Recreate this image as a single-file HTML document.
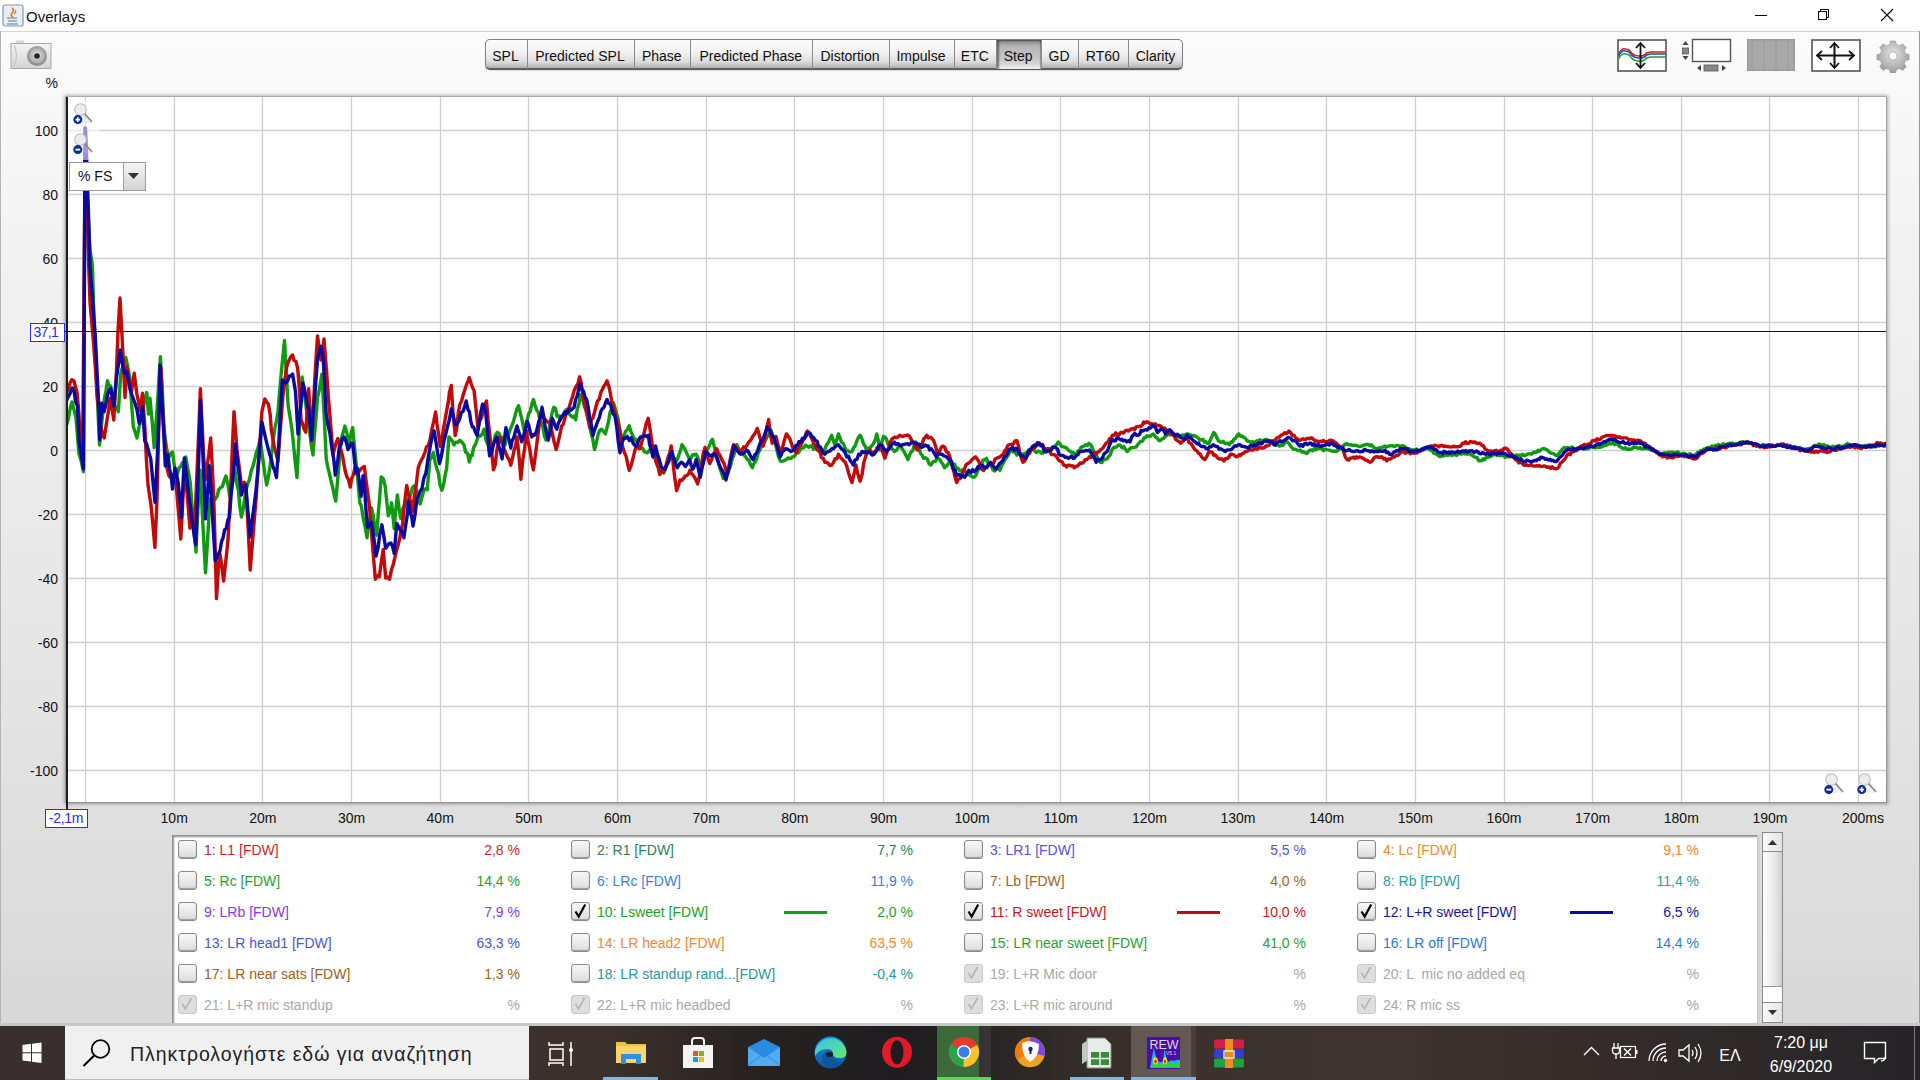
<!DOCTYPE html>
<html><head><meta charset="utf-8"><title>Overlays</title>
<style>
html,body{margin:0;padding:0;}
body{width:1920px;height:1080px;overflow:hidden;position:relative;font-family:"Liberation Sans",sans-serif;background:#fff;}
.t{position:absolute;white-space:pre;}
.a{position:absolute;}
</style></head><body>

<div class="a" style="left:0;top:0;width:1920px;height:31px;background:#ffffff;"></div>
<div class="a" style="left:0;top:31px;width:1920px;height:1px;background:#d2d2d2;"></div>
<div class="a" style="left:0;top:32px;width:1920px;height:994px;background:linear-gradient(#fbfbfb 0px,#f3f3f3 200px,#e6e6e6 600px,#d8d8d8 994px);"></div>
<div class="a" style="left:0;top:31px;width:1px;height:995px;background:#b4b4b4;"></div>
<div class="a" style="left:1919px;top:31px;width:1px;height:995px;background:#9a9a9a;"></div>
<svg class="a" style="left:2px;top:4px" width="22" height="24" viewBox="0 0 22 24">
<rect x="1" y="1" width="20" height="21" rx="2" fill="#e8eef4" stroke="#7a9ab4" stroke-width="1.2"/>
<path d="M10 4 q3 2 0 5 q-2 2 1 4" stroke="#e07820" stroke-width="1.6" fill="none"/>
<path d="M13 6 q2 1 -1 4" stroke="#e07820" stroke-width="1.2" fill="none"/>
<path d="M5 14 h10 M6 17 h9 M5 20 h11" stroke="#5a7a9a" stroke-width="1.2"/>
</svg>
<div class="t" style="left:26.0px;top:9.4px;font-size:15px;line-height:16.75px;color:#111;">Overlays</div>
<div class="a" style="left:1755px;top:15px;width:12px;height:1px;background:#000;"></div>
<svg class="a" style="left:1817px;top:8px" width="14" height="14" viewBox="0 0 14 14">
<rect x="1.5" y="3.5" width="8" height="8" fill="none" stroke="#000" stroke-width="1"/>
<path d="M3.5 3.5 v-2 h8 v8 h-2" fill="none" stroke="#000" stroke-width="1"/></svg>
<svg class="a" style="left:1880px;top:8px" width="14" height="14" viewBox="0 0 14 14">
<path d="M1 1 L13 13 M13 1 L1 13" stroke="#000" stroke-width="1.1"/></svg>
<svg class="a" style="left:10px;top:40px" width="42" height="30" viewBox="0 0 42 30">
<defs><linearGradient id="cam" x1="0" y1="0" x2="0" y2="1"><stop offset="0" stop-color="#f4f4f4"/><stop offset="1" stop-color="#d4d4d4"/></linearGradient>
<radialGradient id="lens" cx="0.5" cy="0.45" r="0.6"><stop offset="0" stop-color="#f0f0f0"/><stop offset="0.6" stop-color="#a8a8a8"/><stop offset="1" stop-color="#7a7a7a"/></radialGradient></defs>
<rect x="6" y="0.5" width="8" height="4" fill="#d8d8d8"/>
<rect x="1" y="3.5" width="40" height="25" fill="url(#cam)" stroke="#a8a8a8" stroke-width="1"/>
<path d="M4 5 q5 10 0 22" stroke="#c4c4c4" stroke-width="1.2" fill="none"/>
<circle cx="27" cy="16" r="10" fill="url(#lens)"/>
<circle cx="27" cy="16" r="6" fill="none" stroke="#bdbdbd" stroke-width="1.5"/>
<circle cx="27" cy="16" r="2.8" fill="#222436"/>
</svg>
<div class="a" style="left:485px;top:39px;width:698px;height:31px;border-radius:5px;background:linear-gradient(#fcfcfc 0%,#f2f2f2 45%,#dcdcdc 78%,#b0b0b0 100%);border:1.5px solid #808080;border-bottom:2px solid #5c5c5c;box-sizing:border-box;box-shadow:0 1px 1px rgba(0,0,0,0.12);"></div>
<div class="t" style="left:205.5px;width:600px;text-align:center;top:48.8px;font-size:14px;line-height:15.64px;color:#111;">SPL</div>
<div class="a" style="left:526.5px;top:40px;width:1px;height:29px;background:#8a8a8a;"></div>
<div class="t" style="left:280.0px;width:600px;text-align:center;top:48.8px;font-size:14px;line-height:15.64px;color:#111;">Predicted SPL</div>
<div class="a" style="left:633.5px;top:40px;width:1px;height:29px;background:#8a8a8a;"></div>
<div class="t" style="left:361.8px;width:600px;text-align:center;top:48.8px;font-size:14px;line-height:15.64px;color:#111;">Phase</div>
<div class="a" style="left:690.0px;top:40px;width:1px;height:29px;background:#8a8a8a;"></div>
<div class="t" style="left:450.8px;width:600px;text-align:center;top:48.8px;font-size:14px;line-height:15.64px;color:#111;">Predicted Phase</div>
<div class="a" style="left:811.5px;top:40px;width:1px;height:29px;background:#8a8a8a;"></div>
<div class="t" style="left:550.0px;width:600px;text-align:center;top:48.8px;font-size:14px;line-height:15.64px;color:#111;">Distortion</div>
<div class="a" style="left:888.5px;top:40px;width:1px;height:29px;background:#8a8a8a;"></div>
<div class="t" style="left:621.0px;width:600px;text-align:center;top:48.8px;font-size:14px;line-height:15.64px;color:#111;">Impulse</div>
<div class="a" style="left:953.5px;top:40px;width:1px;height:29px;background:#8a8a8a;"></div>
<div class="t" style="left:674.8px;width:600px;text-align:center;top:48.8px;font-size:14px;line-height:15.64px;color:#111;">ETC</div>
<div class="a" style="left:996.5px;top:40px;width:44.5px;height:29px;background:linear-gradient(#8a8a8a,#b8b8b8 25%,#c4c4c4 60%,#d8d8d8 85%,#f6f6f6);box-shadow:inset 2px 1px 2px rgba(0,0,0,0.45), inset -1px 0 1px rgba(0,0,0,0.3);"></div>
<div class="a" style="left:996.0px;top:40px;width:1px;height:29px;background:#8a8a8a;"></div>
<div class="t" style="left:718.2px;width:600px;text-align:center;top:48.8px;font-size:14px;line-height:15.64px;color:#111;">Step</div>
<div class="a" style="left:1040.5px;top:40px;width:1px;height:29px;background:#8a8a8a;"></div>
<div class="t" style="left:759.0px;width:600px;text-align:center;top:48.8px;font-size:14px;line-height:15.64px;color:#111;">GD</div>
<div class="a" style="left:1077.5px;top:40px;width:1px;height:29px;background:#8a8a8a;"></div>
<div class="t" style="left:802.8px;width:600px;text-align:center;top:48.8px;font-size:14px;line-height:15.64px;color:#111;">RT60</div>
<div class="a" style="left:1128.0px;top:40px;width:1px;height:29px;background:#8a8a8a;"></div>
<div class="t" style="left:855.5px;width:600px;text-align:center;top:48.8px;font-size:14px;line-height:15.64px;color:#111;">Clarity</div>
<svg class="a" style="left:1616px;top:38px" width="52" height="35" viewBox="0 0 52 35">
<rect x="2" y="2" width="48" height="31" fill="#fff" stroke="#555" stroke-width="1.6"/>
<path d="M2.5 16 q3 -6 7 -5 q4 0 6 4 q3 3 8 3 q5 0 7 -3 l4 -1 h15" stroke="#d02020" stroke-width="1.5" fill="none"/>
<path d="M2.5 18 q3 -6 7 -5 q4 0 6 4 q3 3 8 3 q5 0 7 -3 l4 -1 h15" stroke="#2040d0" stroke-width="1.5" fill="none"/>
<path d="M2.5 21 q3 -6 7 -5 q4 0 6 4 q3 3 8 3 q5 0 7 -3 l4 -1 h15" stroke="#20a020" stroke-width="1.5" fill="none"/>
<path d="M24.5 6 v23 M20 10 l4.5 -5 l4.5 5 M20 25 l4.5 5 l4.5 -5" stroke="#111" stroke-width="1.8" fill="none"/>
</svg>
<svg class="a" style="left:1680px;top:38px" width="54" height="36" viewBox="0 0 54 36">
<rect x="12.5" y="1.5" width="38" height="22" fill="#fff" stroke="#555" stroke-width="1.4"/>
<path d="M2.5 7 l3 -4 l3 4 z M2.5 18 l3 4 l3 -4 z" fill="#444"/>
<rect x="2.5" y="10" width="6" height="6" fill="#888" stroke="#555" stroke-width="0.8"/>
<path d="M17 30 l4 -3 v6 z M46 30 l-4 -3 v6 z" fill="#444"/>
<rect x="24" y="27" width="14" height="6" fill="#888" stroke="#555" stroke-width="0.8"/>
</svg>
<div class="a" style="left:1747px;top:39px;width:48px;height:32px;background:#a8a8a8;box-shadow:inset 0 0 0 1.5px #999;"></div>
<svg class="a" style="left:1747px;top:39px" width="48" height="32"><path d="M5 1 v30 M17 1 v30 M29 1 v30 M41 1 v30" stroke="#999" stroke-width="1"/></svg>
<svg class="a" style="left:1810px;top:38px" width="54" height="35" viewBox="0 0 54 35">
<rect x="2" y="2" width="48" height="31" fill="#fff" stroke="#555" stroke-width="1.6"/>
<path d="M24.5 5 v25 M7 17.5 h37" stroke="#111" stroke-width="2"/>
<path d="M20 10 l4.5 -5 l4.5 5 M20 25 l4.5 5 l4.5 -5 M12 13 l-5 4.5 l5 4.5 M39 13 l5 4.5 l-5 4.5" stroke="#111" stroke-width="1.8" fill="none"/>
</svg>
<svg class="a" style="left:1876px;top:39px" width="34" height="34" viewBox="0 0 34 34">
<defs><radialGradient id="gear" cx="0.5" cy="0.4" r="0.6"><stop offset="0" stop-color="#e8e8e8"/><stop offset="1" stop-color="#9a9a9a"/></radialGradient></defs>
<g transform="translate(17,17)">
<path d="M-2.6 -15 h5.2 l0.8 3.4 l3.2 1.3 l3 -1.9 l3.7 3.7 l-1.9 3 l1.3 3.2 l3.4 0.8 v5.2 l-3.4 0.8 l-1.3 3.2 l1.9 3 l-3.7 3.7 l-3 -1.9 l-3.2 1.3 l-0.8 3.4 h-5.2 l-0.8 -3.4 l-3.2 -1.3 l-3 1.9 l-3.7 -3.7 l1.9 -3 l-1.3 -3.2 l-3.4 -0.8 v-5.2 l3.4 -0.8 l1.3 -3.2 l-1.9 -3 l3.7 -3.7 l3 1.9 l3.2 -1.3 z" fill="url(#gear)" stroke="#9a9a9a" stroke-width="0.6"/>
<circle r="4.2" fill="#fafafa" stroke="#aaa" stroke-width="1"/>
</g></svg>
<div class="a" style="left:66px;top:97px;width:1820px;height:705px;background:#fff;box-shadow:0 0 0 1px rgba(0,0,0,0.12), 0 0 3.5px 2.5px rgba(0,0,0,0.30);"></div>
<div class="a" style="left:66px;top:97px;width:2px;height:705px;background:#1e1e1e;"></div>
<svg class="a" style="left:0;top:0" width="1920" height="1080">
<line x1="85.5" y1="97" x2="85.5" y2="802" stroke="#cfcfcf" stroke-width="1.3"/>
<line x1="174.5" y1="97" x2="174.5" y2="802" stroke="#cfcfcf" stroke-width="1.3"/>
<line x1="262.5" y1="97" x2="262.5" y2="802" stroke="#cfcfcf" stroke-width="1.3"/>
<line x1="351.5" y1="97" x2="351.5" y2="802" stroke="#cfcfcf" stroke-width="1.3"/>
<line x1="440.5" y1="97" x2="440.5" y2="802" stroke="#cfcfcf" stroke-width="1.3"/>
<line x1="528.5" y1="97" x2="528.5" y2="802" stroke="#cfcfcf" stroke-width="1.3"/>
<line x1="617.5" y1="97" x2="617.5" y2="802" stroke="#cfcfcf" stroke-width="1.3"/>
<line x1="706.5" y1="97" x2="706.5" y2="802" stroke="#cfcfcf" stroke-width="1.3"/>
<line x1="794.5" y1="97" x2="794.5" y2="802" stroke="#cfcfcf" stroke-width="1.3"/>
<line x1="883.5" y1="97" x2="883.5" y2="802" stroke="#cfcfcf" stroke-width="1.3"/>
<line x1="972.5" y1="97" x2="972.5" y2="802" stroke="#cfcfcf" stroke-width="1.3"/>
<line x1="1060.5" y1="97" x2="1060.5" y2="802" stroke="#cfcfcf" stroke-width="1.3"/>
<line x1="1149.5" y1="97" x2="1149.5" y2="802" stroke="#cfcfcf" stroke-width="1.3"/>
<line x1="1238.5" y1="97" x2="1238.5" y2="802" stroke="#cfcfcf" stroke-width="1.3"/>
<line x1="1326.5" y1="97" x2="1326.5" y2="802" stroke="#cfcfcf" stroke-width="1.3"/>
<line x1="1415.5" y1="97" x2="1415.5" y2="802" stroke="#cfcfcf" stroke-width="1.3"/>
<line x1="1504.5" y1="97" x2="1504.5" y2="802" stroke="#cfcfcf" stroke-width="1.3"/>
<line x1="1592.5" y1="97" x2="1592.5" y2="802" stroke="#cfcfcf" stroke-width="1.3"/>
<line x1="1681.5" y1="97" x2="1681.5" y2="802" stroke="#cfcfcf" stroke-width="1.3"/>
<line x1="1769.5" y1="97" x2="1769.5" y2="802" stroke="#cfcfcf" stroke-width="1.3"/>
<line x1="1858.5" y1="97" x2="1858.5" y2="802" stroke="#cfcfcf" stroke-width="1.3"/>
<line x1="68" y1="770.5" x2="1886" y2="770.5" stroke="#cfcfcf" stroke-width="1.3"/>
<line x1="68" y1="706.5" x2="1886" y2="706.5" stroke="#cfcfcf" stroke-width="1.3"/>
<line x1="68" y1="642.5" x2="1886" y2="642.5" stroke="#cfcfcf" stroke-width="1.3"/>
<line x1="68" y1="578.5" x2="1886" y2="578.5" stroke="#cfcfcf" stroke-width="1.3"/>
<line x1="68" y1="514.5" x2="1886" y2="514.5" stroke="#cfcfcf" stroke-width="1.3"/>
<line x1="68" y1="450.5" x2="1886" y2="450.5" stroke="#cfcfcf" stroke-width="1.3"/>
<line x1="68" y1="386.5" x2="1886" y2="386.5" stroke="#cfcfcf" stroke-width="1.3"/>
<line x1="68" y1="322.5" x2="1886" y2="322.5" stroke="#cfcfcf" stroke-width="1.3"/>
<line x1="68" y1="258.5" x2="1886" y2="258.5" stroke="#cfcfcf" stroke-width="1.3"/>
<line x1="68" y1="194.5" x2="1886" y2="194.5" stroke="#cfcfcf" stroke-width="1.3"/>
<line x1="68" y1="130.5" x2="1886" y2="130.5" stroke="#cfcfcf" stroke-width="1.3"/>
</svg>
<div class="t" style="right:1862.0px;top:764.0px;font-size:14px;line-height:15.64px;color:#111;">-100</div>
<div class="t" style="right:1862.0px;top:700.0px;font-size:14px;line-height:15.64px;color:#111;">-80</div>
<div class="t" style="right:1862.0px;top:636.0px;font-size:14px;line-height:15.64px;color:#111;">-60</div>
<div class="t" style="right:1862.0px;top:572.0px;font-size:14px;line-height:15.64px;color:#111;">-40</div>
<div class="t" style="right:1862.0px;top:508.0px;font-size:14px;line-height:15.64px;color:#111;">-20</div>
<div class="t" style="right:1862.0px;top:444.0px;font-size:14px;line-height:15.64px;color:#111;">0</div>
<div class="t" style="right:1862.0px;top:380.0px;font-size:14px;line-height:15.64px;color:#111;">20</div>
<div class="t" style="right:1862.0px;top:252.1px;font-size:14px;line-height:15.64px;color:#111;">60</div>
<div class="t" style="right:1862.0px;top:188.1px;font-size:14px;line-height:15.64px;color:#111;">80</div>
<div class="t" style="right:1862.0px;top:124.1px;font-size:14px;line-height:15.64px;color:#111;">100</div>
<div class="t" style="right:1862.0px;top:316.0px;font-size:14px;line-height:15.64px;color:#111;clip-path:inset(0 0 6px 0);">40</div>
<div class="t" style="right:1862.0px;top:76.3px;font-size:14px;line-height:15.64px;color:#111;">%</div>
<div class="t" style="left:-125.8px;width:600px;text-align:center;top:810.8px;font-size:14px;line-height:15.64px;color:#111;">10m</div>
<div class="t" style="left:-37.1px;width:600px;text-align:center;top:810.8px;font-size:14px;line-height:15.64px;color:#111;">20m</div>
<div class="t" style="left:51.5px;width:600px;text-align:center;top:810.8px;font-size:14px;line-height:15.64px;color:#111;">30m</div>
<div class="t" style="left:140.2px;width:600px;text-align:center;top:810.8px;font-size:14px;line-height:15.64px;color:#111;">40m</div>
<div class="t" style="left:228.9px;width:600px;text-align:center;top:810.8px;font-size:14px;line-height:15.64px;color:#111;">50m</div>
<div class="t" style="left:317.5px;width:600px;text-align:center;top:810.8px;font-size:14px;line-height:15.64px;color:#111;">60m</div>
<div class="t" style="left:406.2px;width:600px;text-align:center;top:810.8px;font-size:14px;line-height:15.64px;color:#111;">70m</div>
<div class="t" style="left:494.8px;width:600px;text-align:center;top:810.8px;font-size:14px;line-height:15.64px;color:#111;">80m</div>
<div class="t" style="left:583.5px;width:600px;text-align:center;top:810.8px;font-size:14px;line-height:15.64px;color:#111;">90m</div>
<div class="t" style="left:672.1px;width:600px;text-align:center;top:810.8px;font-size:14px;line-height:15.64px;color:#111;">100m</div>
<div class="t" style="left:760.8px;width:600px;text-align:center;top:810.8px;font-size:14px;line-height:15.64px;color:#111;">110m</div>
<div class="t" style="left:849.4px;width:600px;text-align:center;top:810.8px;font-size:14px;line-height:15.64px;color:#111;">120m</div>
<div class="t" style="left:938.0px;width:600px;text-align:center;top:810.8px;font-size:14px;line-height:15.64px;color:#111;">130m</div>
<div class="t" style="left:1026.7px;width:600px;text-align:center;top:810.8px;font-size:14px;line-height:15.64px;color:#111;">140m</div>
<div class="t" style="left:1115.3px;width:600px;text-align:center;top:810.8px;font-size:14px;line-height:15.64px;color:#111;">150m</div>
<div class="t" style="left:1204.0px;width:600px;text-align:center;top:810.8px;font-size:14px;line-height:15.64px;color:#111;">160m</div>
<div class="t" style="left:1292.6px;width:600px;text-align:center;top:810.8px;font-size:14px;line-height:15.64px;color:#111;">170m</div>
<div class="t" style="left:1381.3px;width:600px;text-align:center;top:810.8px;font-size:14px;line-height:15.64px;color:#111;">180m</div>
<div class="t" style="left:1470.0px;width:600px;text-align:center;top:810.8px;font-size:14px;line-height:15.64px;color:#111;">190m</div>
<div class="t" style="right:36.0px;top:810.8px;font-size:14px;line-height:15.64px;color:#111;">200ms</div>
<svg class="a" style="left:0;top:0" width="1920" height="1080"><defs><clipPath id="pc"><rect x="68" y="97" width="1818" height="705"/></clipPath></defs><g clip-path="url(#pc)" fill="none" stroke-width="3.4" stroke-linejoin="round" stroke-linecap="round">
<polyline points="66.6,425.0 68.2,419.3 70.3,408.3 72.0,402.0 74.0,409.7 76.0,418.0 77.6,437.6 79.0,454.0 81.0,460.2 83.4,471.7 84.3,300.0 85.0,140.0 87.0,200.0 88.7,224.6 90.0,250.0 92.4,265.0 94.0,320.0 95.6,352.2 97.0,390.0 99.5,445.0 102.0,420.0 104.5,398.0 106.0,390.6 107.5,380.8 108.9,385.9 110.5,386.0 112.5,394.2 115.0,408.0 116.9,407.2 118.3,411.7 120.8,373.3 122.2,368.3 124.4,362.1 125.8,357.5 127.8,367.5 130.0,378.3 131.4,400.9 133.3,426.7 135.1,432.3 137.0,438.0 138.9,427.5 141.0,420.0 142.8,410.6 144.7,399.0 146.7,392.5 148.5,414.0 150.0,398.3 152.3,423.2 154.2,447.5 157.0,410.0 158.8,381.6 160.4,356.7 162.5,395.4 164.2,430.0 166.7,449.0 169.0,457.0 170.6,453.6 172.5,452.0 174.4,466.2 176.0,478.0 177.7,472.6 179.0,468.0 180.9,466.2 182.3,463.0 184.3,461.7 185.8,457.0 188.0,470.0 190.2,482.0 191.9,503.9 194.2,528.2 196.0,552.0 197.8,511.3 200.0,470.0 201.9,505.2 203.6,538.1 205.5,572.7 207.0,550.0 208.5,523.6 210.0,500.0 211.7,497.2 213.2,500.7 215.2,499.4 217.2,496.1 218.6,489.8 220.4,487.8 222.3,486.6 224.3,480.2 226.0,476.0 228.0,484.8 229.7,496.5 231.5,490.2 233.3,478.6 235.0,470.0 236.5,482.0 238.4,490.7 239.9,507.0 241.4,517.0 243.1,509.3 244.6,499.1 246.0,490.0 247.8,483.5 249.3,480.0 251.4,470.2 253.1,465.8 254.8,459.3 256.5,452.0 258.3,447.1 260.0,440.0 261.7,451.0 263.1,461.0 264.9,474.2 266.7,485.0 268.5,476.2 270.1,465.8 271.4,455.5 273.2,440.8 274.5,429.9 276.5,420.8 278.0,411.7 279.4,394.6 281.2,373.7 282.7,358.5 284.5,340.5 286.2,372.1 288.2,406.3 290.2,417.9 292.0,430.0 293.6,445.7 295.1,461.0 297.0,477.5 298.7,442.3 300.2,412.7 302.1,377.0 304.1,389.7 306.1,407.4 308.0,420.0 309.4,429.0 311.2,444.6 313.0,455.0 314.3,437.0 316.1,416.9 317.5,397.5 319.6,388.5 321.9,374.1 324.2,416.4 326.2,458.5 327.6,466.4 329.3,473.1 330.9,480.5 332.3,485.7 334.4,496.0 335.7,501.0 337.4,482.7 339.1,462.8 341.0,440.0 343.1,432.6 344.9,426.1 346.8,432.8 349.0,445.0 351.0,433.7 352.7,427.6 354.5,447.4 356.0,462.0 357.9,480.6 359.8,502.8 361.3,505.9 363.4,519.2 365.2,527.2 367.0,537.8 368.4,527.0 369.9,518.9 371.5,508.0 373.2,515.4 374.8,527.1 376.7,535.2 378.1,515.8 379.6,498.4 381.2,476.9 383.3,478.7 385.1,485.9 386.6,499.8 388.3,515.7 390.2,510.8 391.6,502.8 394.2,528.7 395.7,510.2 397.4,495.0 399.1,508.5 400.7,518.3 402.6,509.3 404.5,505.0 406.3,503.4 407.8,498.9 409.4,498.4 410.9,493.7 412.5,487.3 414.3,485.9 416.4,490.3 418.3,498.5 420.1,504.0 422.2,496.3 424.0,490.0 425.5,488.7 427.2,489.8 429.8,460.0 431.7,456.9 433.3,452.7 435.2,462.4 436.6,468.0 438.3,472.6 440.0,484.8 441.9,490.2 443.6,484.6 445.0,475.9 446.7,467.8 448.9,437.0 450.7,439.0 452.3,440.8 454.0,445.0 455.8,442.1 458.1,442.2 459.9,440.2 462.2,442.4 464.0,445.0 465.7,452.3 467.7,453.6 469.3,462.0 470.9,455.3 472.2,455.4 473.7,447.3 475.7,444.0 477.0,440.0 478.6,435.4 480.4,436.0 482.1,434.2 484.1,429.2 486.0,440.4 488.2,445.2 490.0,455.0 491.7,449.2 493.5,444.5 495.3,435.2 497.4,432.3 499.2,433.7 500.5,437.1 501.9,437.5 503.7,445.1 505.0,445.0 506.9,437.8 508.2,435.7 510.0,430.0 512.0,425.4 513.5,421.2 515.0,415.7 516.8,409.1 518.6,405.7 520.2,412.6 522.4,421.6 524.0,430.0 525.6,425.7 527.4,419.2 528.6,413.8 530.2,411.6 532.0,403.5 533.4,399.5 535.0,404.9 536.7,410.3 538.2,412.2 540.0,420.0 541.4,422.6 543.0,427.6 544.3,435.8 546.0,440.0 547.5,435.1 549.1,429.0 550.5,420.4 552.4,411.5 553.8,407.3 555.6,408.6 557.0,416.4 558.6,415.8 560.0,420.0 561.4,418.1 563.4,414.8 565.0,412.0 566.6,409.4 568.0,410.0 569.4,414.2 571.2,416.2 572.8,417.3 574.3,416.0 575.7,419.8 577.2,409.6 578.9,404.1 580.4,394.8 582.1,397.4 584.4,406.7 586.0,410.0 587.7,418.1 589.6,425.5 591.0,432.8 592.7,438.9 594.5,449.5 596.4,442.5 598.2,434.0 600.0,430.0 601.7,429.3 603.4,431.3 605.4,433.9 607.1,427.1 608.5,422.0 610.0,412.4 611.7,408.9 613.3,402.6 615.6,409.8 617.7,417.6 619.9,430.1 622.0,440.0 623.7,436.4 625.6,431.3 627.4,429.6 629.2,425.7 631.3,432.8 633.0,436.1 635.0,440.0 636.3,439.6 638.0,446.1 639.3,447.5 641.0,448.0 642.8,448.5 644.3,451.7 645.8,452.4 647.5,452.8 649.1,450.6 650.7,449.1 652.0,445.0 653.7,450.3 654.8,454.1 656.4,460.3 658.0,465.0 660.0,466.0 661.9,471.2 663.7,473.1 665.2,468.6 666.7,464.9 668.2,461.4 670.0,455.0 671.7,457.2 672.9,460.1 674.7,458.9 676.0,462.0 677.6,459.0 679.1,454.1 680.5,450.6 682.0,444.7 684.0,447.6 685.7,451.1 687.1,454.0 689.0,458.0 690.6,458.6 692.8,454.7 694.5,454.8 696.2,454.2 697.9,458.0 699.9,464.3 702.0,468.0 703.4,460.8 705.3,454.2 707.0,450.0 708.9,446.8 710.8,441.8 712.5,439.3 714.2,446.4 716.1,453.4 718.0,460.0 719.6,466.9 721.7,473.5 723.3,478.5 725.4,475.8 727.1,474.2 729.0,470.0 730.7,465.2 732.1,459.1 733.5,456.0 735.1,450.7 736.9,444.7 738.7,449.0 740.6,451.6 742.0,452.4 744.0,455.0 745.7,456.8 747.4,459.5 749.1,460.7 750.7,465.0 752.4,467.7 753.8,463.8 755.6,461.3 757.0,457.6 758.4,452.4 760.0,450.0 761.3,446.3 763.1,445.7 764.8,441.4 766.4,438.3 767.8,435.2 769.3,434.5 770.7,429.8 772.2,433.7 773.9,440.3 775.4,443.5 777.0,450.3 778.6,457.1 780.2,460.9 781.8,461.3 783.4,460.8 784.8,460.3 786.4,459.5 787.9,458.0 789.4,458.4 791.1,458.5 792.4,456.9 794.1,456.5 795.6,454.5 796.9,451.9 798.6,452.8 800.0,450.0 801.8,447.7 803.8,447.9 805.5,445.3 807.3,446.0 808.8,447.3 810.3,446.2 812.0,445.4 813.5,449.3 815.0,448.0 816.7,448.4 818.3,450.0 819.7,449.3 821.6,450.3 823.0,452.0 824.5,449.9 826.5,444.8 828.2,442.8 829.8,439.1 831.7,435.2 833.5,441.3 835.0,445.0 836.6,439.9 838.4,433.9 839.9,437.7 841.5,442.1 843.5,443.8 845.0,448.0 846.6,450.6 848.6,451.1 850.0,452.1 852.0,451.5 853.7,447.5 855.2,446.0 857.0,440.5 858.5,437.2 860.1,435.2 862.0,439.1 863.7,444.2 865.3,446.5 866.9,451.5 868.5,447.9 870.0,448.0 871.7,445.9 873.3,443.6 875.0,440.6 876.8,433.9 878.5,441.2 880.0,450.0 881.6,442.9 883.5,436.6 885.1,437.2 886.5,439.2 888.2,444.5 889.6,443.3 891.4,448.4 893.1,449.8 894.4,451.5 896.2,450.6 897.9,447.9 900.0,445.0 901.4,447.5 903.2,450.4 904.6,452.7 906.5,456.5 907.9,459.6 909.6,455.0 911.2,451.9 912.8,450.6 914.6,443.8 916.0,442.0 917.6,446.6 918.9,448.1 920.5,453.3 922.0,455.0 923.7,458.4 925.7,457.7 927.5,459.2 928.9,463.6 930.9,465.0 932.2,462.8 933.8,461.4 935.6,461.3 937.0,458.0 938.3,458.3 940.2,460.1 941.4,462.4 942.8,464.0 944.5,467.7 946.4,466.1 948.3,463.9 950.0,460.0 951.6,461.3 953.2,465.3 954.8,464.2 956.0,468.6 957.9,468.1 959.4,470.4 961.1,471.0 962.7,469.5 964.3,471.3 966.0,472.0 967.5,474.5 969.3,474.7 971.1,476.0 972.8,477.1 974.3,477.2 976.1,474.9 977.9,470.7 980.0,465.0 981.8,464.6 983.0,460.0 985.0,459.8 986.5,458.2 988.1,463.0 989.5,464.2 991.3,465.6 993.0,470.0 994.7,470.9 996.7,468.4 998.3,468.7 1000.0,470.4 1001.8,465.4 1003.1,463.2 1005.1,459.5 1006.5,457.9 1008.5,454.8 1010.0,450.0 1011.6,450.5 1013.2,451.9 1014.9,451.9 1016.8,455.1 1018.4,452.7 1020.0,455.0 1021.7,454.0 1023.6,454.2 1025.2,453.3 1026.7,453.2 1028.5,450.0 1030.0,450.0 1031.5,449.9 1033.3,449.2 1034.9,451.3 1036.4,452.6 1038.4,451.0 1039.9,451.5 1041.6,453.4 1043.3,452.8 1045.0,451.7 1046.4,452.0 1048.2,448.5 1049.7,449.8 1051.6,448.4 1053.4,447.4 1055.0,446.0 1056.8,444.3 1058.2,442.0 1059.7,443.4 1061.6,446.6 1063.4,446.8 1065.0,447.4 1066.8,448.1 1068.6,450.5 1070.0,451.1 1071.9,452.6 1073.2,452.4 1075.0,455.0 1076.6,453.7 1078.2,450.8 1079.5,451.4 1080.8,447.5 1082.5,446.6 1084.0,446.0 1085.5,444.8 1087.4,445.5 1088.8,443.4 1090.7,444.7 1092.5,448.2 1093.7,451.9 1095.2,453.0 1097.2,457.2 1098.5,460.9 1100.2,462.3 1101.9,462.6 1103.6,459.9 1105.1,459.2 1106.9,459.1 1108.3,456.9 1110.2,454.9 1112.1,449.6 1113.7,447.4 1115.1,447.7 1117.0,446.3 1118.4,445.2 1120.0,445.0 1122.0,447.8 1123.7,446.5 1125.7,449.7 1127.3,451.5 1128.9,449.7 1131.0,447.6 1132.5,447.7 1134.5,447.4 1136.3,446.8 1137.9,444.4 1139.3,442.8 1140.8,441.2 1142.6,441.2 1144.0,437.9 1145.5,437.7 1147.0,435.8 1148.7,436.2 1150.3,436.4 1151.7,434.9 1153.4,433.9 1155.5,436.7 1157.1,438.1 1158.9,440.6 1160.4,440.5 1162.2,438.8 1163.8,438.3 1165.3,435.9 1166.7,435.7 1168.3,433.9 1169.8,434.9 1171.4,434.3 1172.9,434.1 1174.5,435.2 1175.8,435.0 1177.5,437.1 1179.2,436.6 1180.9,435.5 1182.7,434.9 1184.1,435.6 1185.8,434.3 1187.3,433.9 1189.0,434.4 1190.5,435.0 1192.2,436.1 1193.3,435.3 1195.2,436.1 1196.3,436.7 1198.1,437.9 1199.6,439.8 1201.2,440.0 1202.9,439.2 1204.4,442.2 1205.9,441.8 1207.4,443.6 1209.0,443.3 1210.8,438.7 1212.2,435.9 1213.7,432.5 1215.4,434.3 1216.7,437.4 1218.4,440.6 1219.9,441.9 1221.7,442.5 1223.2,441.4 1224.6,443.3 1226.1,443.5 1227.9,443.2 1229.3,444.7 1231.0,442.0 1232.4,442.1 1233.9,439.3 1235.5,438.4 1237.4,435.2 1238.7,433.9 1240.3,436.2 1242.0,435.9 1243.7,437.5 1245.3,438.1 1246.9,440.6 1248.8,441.3 1250.5,442.4 1251.8,441.7 1253.6,442.0 1255.1,442.3 1256.8,440.7 1258.1,441.5 1259.7,439.8 1261.1,440.5 1262.8,441.1 1264.3,439.9 1265.8,439.3 1267.1,439.8 1268.7,441.3 1270.2,440.8 1271.8,442.2 1273.3,443.3 1274.7,444.7 1276.5,444.6 1277.7,444.8 1279.4,446.0 1281.1,445.5 1282.8,445.3 1284.2,443.6 1285.8,441.9 1287.5,442.0 1289.1,443.6 1290.9,446.6 1292.9,448.7 1294.5,449.4 1296.0,449.1 1297.3,450.4 1299.2,450.6 1300.3,450.1 1302.0,452.1 1303.4,451.6 1305.1,452.8 1306.7,453.5 1308.1,452.0 1309.7,450.1 1311.1,449.9 1312.6,450.9 1314.3,448.6 1315.6,449.8 1317.3,448.7 1318.7,448.5 1320.3,448.1 1321.8,448.5 1323.5,450.7 1325.2,449.2 1326.8,449.6 1328.3,449.9 1330.1,450.2 1331.6,451.1 1333.2,451.3 1334.8,451.0 1336.2,451.5 1337.9,450.4 1339.5,448.9 1341.1,447.2 1343.0,446.4 1344.4,444.7 1346.0,443.7 1347.6,444.2 1349.1,444.9 1350.8,444.6 1352.3,445.4 1354.0,445.2 1355.4,445.2 1357.3,445.8 1358.8,446.6 1360.5,446.3 1362.0,446.0 1363.3,445.3 1365.2,444.7 1366.9,444.5 1368.5,444.5 1370.0,445.8 1371.4,444.7 1373.2,447.0 1374.9,448.2 1376.9,448.7 1378.5,448.0 1379.9,447.9 1381.6,447.5 1383.5,446.8 1385.0,446.0 1386.3,447.0 1388.4,446.2 1389.7,445.9 1391.5,445.6 1393.0,445.9 1394.4,446.6 1396.0,445.7 1397.6,445.4 1399.0,445.8 1400.6,446.7 1402.2,445.6 1403.8,446.2 1405.6,447.2 1407.1,449.1 1409.0,448.8 1410.6,449.6 1411.9,450.0 1413.5,449.8 1415.2,450.1 1416.6,449.1 1418.3,450.8 1419.6,450.5 1421.1,449.9 1422.9,450.0 1424.0,449.0 1425.6,448.5 1427.4,448.7 1428.7,448.7 1430.4,450.2 1431.9,449.9 1433.5,453.0 1434.9,453.6 1436.6,454.0 1438.2,455.5 1439.8,456.6 1441.0,456.3 1442.7,456.0 1444.2,455.7 1445.7,454.7 1447.6,455.4 1449.1,454.8 1450.5,454.8 1452.1,455.3 1453.4,454.5 1455.1,454.7 1456.8,455.3 1458.0,454.1 1459.5,453.1 1461.2,454.2 1462.6,453.2 1464.6,454.0 1466.3,452.9 1467.6,454.2 1469.4,452.8 1471.1,455.0 1472.2,454.9 1474.1,456.8 1475.8,457.5 1477.1,457.4 1478.8,460.9 1480.2,460.9 1481.9,460.5 1483.1,458.8 1484.8,459.7 1486.4,457.1 1487.7,457.2 1489.2,457.1 1490.9,456.2 1492.3,455.4 1493.7,454.2 1495.4,454.6 1496.9,455.5 1498.5,455.4 1500.3,455.5 1502.0,455.6 1503.9,455.4 1505.0,457.4 1506.9,456.1 1508.6,456.9 1510.1,456.9 1512.0,456.9 1513.3,456.3 1514.9,456.0 1516.5,454.9 1518.1,455.5 1519.6,455.1 1521.0,456.0 1522.6,454.2 1524.2,455.7 1525.8,455.1 1527.3,454.2 1528.5,453.9 1530.1,453.8 1531.7,454.2 1533.2,452.6 1534.6,452.0 1536.2,452.6 1537.9,450.3 1539.4,451.2 1541.0,449.6 1542.5,448.7 1543.9,448.7 1545.6,449.2 1547.1,449.9 1548.6,451.4 1550.1,452.7 1551.3,453.3 1552.8,453.4 1554.4,454.2 1556.0,455.5 1557.7,455.0 1559.2,453.1 1560.8,451.1 1562.5,449.1 1564.2,447.4 1565.6,448.2 1567.2,447.4 1568.8,448.3 1570.5,447.9 1572.2,447.1 1573.4,448.5 1575.1,448.6 1577.0,448.2 1578.2,448.8 1580.0,447.4 1581.4,448.1 1583.1,448.1 1584.4,449.0 1586.2,448.7 1587.6,448.9 1589.0,448.3 1590.5,446.5 1592.0,446.9 1593.8,447.3 1595.2,447.8 1596.7,447.4 1598.2,447.3 1600.0,447.5 1601.6,446.8 1603.4,446.2 1604.8,444.5 1606.2,445.4 1607.9,444.3 1609.6,442.5 1611.1,443.9 1612.9,442.7 1614.5,444.6 1616.2,443.4 1617.6,444.2 1619.0,446.0 1620.8,447.2 1622.0,447.9 1623.7,448.7 1625.3,447.8 1626.9,449.3 1628.8,449.0 1630.0,449.2 1631.8,448.9 1633.3,447.1 1635.3,447.3 1636.5,447.7 1638.6,448.3 1640.0,447.4 1641.6,448.9 1643.5,448.9 1645.2,448.1 1647.0,448.6 1648.5,449.0 1650.3,449.7 1651.8,450.1 1653.1,450.9 1654.6,450.4 1656.3,452.7 1657.7,453.3 1659.4,453.0 1661.0,453.6 1662.4,454.0 1664.0,452.9 1665.2,452.8 1666.7,453.5 1668.3,452.1 1669.9,452.6 1671.4,452.2 1672.9,452.1 1674.6,453.2 1676.0,452.7 1677.8,451.9 1679.1,452.9 1680.7,454.6 1682.4,454.0 1683.7,453.2 1685.4,454.3 1687.1,455.6 1688.7,454.8 1689.8,453.6 1691.6,455.5 1693.0,456.0 1694.6,455.0 1696.2,454.3 1697.7,452.2 1699.0,453.4 1700.6,450.5 1702.1,451.2 1703.6,449.1 1705.2,448.8 1706.8,448.0 1708.6,447.2 1710.3,448.5 1711.9,446.0 1713.3,447.7 1715.3,445.5 1716.7,445.7 1718.5,444.5 1720.0,445.9 1721.7,445.0 1723.5,443.7 1725.1,445.1 1726.9,444.3 1728.6,443.6 1729.8,443.3 1731.7,443.1 1733.2,443.1 1734.7,444.8 1736.6,443.5 1738.1,444.5 1739.8,442.5 1741.4,441.9 1743.0,441.8 1744.2,442.9 1745.6,443.3 1747.4,442.5 1748.7,443.7 1750.2,443.4 1751.8,443.3 1753.5,443.9 1755.0,445.1 1756.4,444.4 1758.2,445.1 1759.6,446.0 1761.4,445.7 1762.7,444.6 1764.0,444.6 1765.8,445.8 1767.5,445.1 1769.0,444.8 1770.4,445.0 1771.7,444.8 1773.6,445.7 1775.3,445.8 1776.6,445.1 1778.1,444.9 1779.7,445.2 1781.2,445.0 1782.9,445.1 1784.2,446.3 1785.9,445.8 1787.3,446.7 1788.9,445.7 1790.3,446.8 1791.6,446.6 1793.4,447.0 1795.3,446.6 1796.7,448.0 1798.6,448.3 1800.1,447.8 1801.6,448.7 1803.3,449.4 1804.7,449.5 1806.8,448.8 1808.3,449.5 1809.6,448.3 1811.5,448.6 1813.2,446.4 1814.3,445.4 1816.3,445.9 1817.5,445.2 1819.2,444.0 1820.9,444.7 1822.1,446.0 1823.8,444.6 1825.4,445.8 1826.8,445.9 1828.2,446.4 1829.8,447.0 1831.3,447.5 1833.1,446.2 1834.3,448.0 1836.2,447.0 1837.8,445.8 1839.2,445.4 1840.7,447.0 1842.6,446.5 1843.9,445.8 1845.6,445.0 1847.4,443.6 1848.9,444.5 1850.3,444.8 1852.1,444.9 1853.3,445.2 1855.0,444.7 1856.5,444.8 1857.7,445.0 1859.3,445.6 1861.0,446.7 1862.5,446.0 1864.2,446.6 1865.8,445.4 1867.1,445.4 1868.5,446.0 1870.2,445.1 1872.0,447.1 1873.3,446.0 1874.6,444.8 1876.1,446.6 1878.1,445.0 1879.2,446.1 1880.8,444.8 1882.2,445.3 1883.8,445.5 1885.5,446.0" stroke="#109a10"/>
<polyline points="66.6,392.0 68.5,390.0 70.0,383.0 71.8,379.7 74.0,381.0 75.7,387.8 77.0,392.0 78.6,409.9 80.0,430.0 82.5,462.0 84.0,300.0 85.5,128.0 86.5,150.0 88.5,260.0 90.0,302.0 91.7,321.6 93.3,340.0 95.2,365.6 97.0,395.0 98.7,409.4 100.5,425.0 102.5,434.3 104.2,438.0 107.0,420.0 108.7,409.4 110.0,398.3 111.9,407.9 113.8,420.0 116.5,370.0 118.0,331.4 120.0,298.0 122.5,345.0 125.0,397.5 126.7,366.7 129.0,380.0 131.5,392.0 134.2,373.3 137.0,395.0 138.5,401.9 140.0,410.8 142.5,393.3 145.0,430.0 146.4,459.7 148.0,485.0 149.5,495.3 151.0,505.0 152.8,523.5 154.9,547.4 157.0,500.0 159.5,395.0 161.0,368.0 163.0,420.0 164.9,442.0 167.0,468.0 169.0,475.8 171.0,478.0 172.8,477.6 174.5,482.3 176.0,482.0 177.7,503.3 179.3,521.6 180.8,539.0 182.5,507.2 184.3,470.0 187.0,492.0 189.9,528.0 191.8,523.4 193.4,523.9 195.0,520.0 196.8,476.4 198.6,434.8 200.4,388.7 201.9,421.0 203.4,451.7 205.0,480.0 207.1,465.8 208.8,454.4 210.7,438.0 212.5,471.4 214.0,505.0 216.5,598.6 218.0,574.8 219.7,553.0 221.7,565.1 223.6,581.0 226.0,559.2 228.0,540.0 229.7,506.9 231.2,477.0 232.5,443.9 234.0,411.7 235.6,431.3 237.0,450.0 238.9,464.4 241.0,482.0 242.6,485.8 244.3,482.3 245.8,486.0 248.2,529.3 250.2,570.0 252.3,544.9 254.2,520.9 256.0,500.0 258.0,469.3 259.8,443.2 261.9,411.7 264.8,399.0 266.5,401.8 268.5,404.4 270.2,414.8 271.4,430.3 273.0,440.0 274.6,448.3 276.1,453.5 278.0,461.4 279.5,440.2 281.1,419.7 283.0,395.0 284.6,382.2 286.7,366.8 288.4,361.5 290.8,357.0 292.6,355.0 294.1,360.5 295.9,361.3 297.7,368.3 299.6,392.2 301.0,420.0 302.4,423.2 304.3,429.5 305.8,432.2 308.7,388.7 311.6,441.0 313.4,405.1 315.3,370.7 317.5,336.0 319.4,349.3 321.0,360.0 322.7,350.9 324.0,339.0 326.4,369.4 328.4,397.5 329.9,415.1 331.5,434.8 333.0,455.0 334.4,449.2 336.4,442.0 337.8,438.6 339.4,444.4 340.8,449.4 342.6,456.4 343.9,463.7 345.1,470.8 346.9,476.9 348.4,479.5 350.3,487.1 351.6,478.8 353.2,475.1 355.0,468.0 356.7,471.4 358.6,472.1 360.0,470.0 362.1,467.9 364.4,466.5 365.8,478.7 367.5,491.5 368.9,501.5 370.6,519.6 372.1,540.5 373.5,557.2 375.4,579.3 377.3,575.8 379.3,576.7 381.4,561.6 383.2,549.5 385.7,578.0 387.4,576.9 389.6,579.3 391.4,569.9 393.5,563.7 395.0,556.8 396.4,551.1 397.9,545.9 399.8,538.2 401.1,530.3 402.6,523.5 404.7,502.0 406.7,485.5 408.5,494.4 410.3,500.8 412.3,511.9 414.4,496.5 416.2,484.9 418.2,467.8 420.0,462.7 421.8,459.2 423.1,457.0 425.0,452.0 426.5,446.9 428.5,445.0 430.0,440.0 431.6,430.4 433.7,421.3 435.6,412.0 437.0,424.0 438.5,433.7 440.3,446.4 441.8,440.1 443.2,430.4 444.9,420.7 446.5,411.3 448.3,402.2 449.5,392.0 451.3,385.4 453.0,412.4 455.2,435.5 456.8,427.6 458.4,412.0 459.9,404.2 461.5,401.3 463.1,395.3 464.5,390.7 466.3,385.2 467.7,381.9 469.3,377.6 471.1,383.5 472.6,387.8 474.0,390.1 475.8,407.3 477.9,427.6 479.6,420.9 481.3,418.0 483.3,412.1 484.9,404.1 486.5,401.0 488.2,421.0 489.8,435.0 491.5,450.4 493.5,469.9 495.3,464.4 496.7,451.4 498.1,443.7 499.8,437.0 501.5,442.0 502.9,445.2 504.3,449.3 506.3,454.5 507.5,457.2 509.3,459.8 510.8,465.2 512.5,457.9 514.0,450.6 515.7,445.6 517.0,437.0 519.0,456.2 520.9,479.3 522.7,460.5 524.6,449.1 526.4,430.8 528.0,440.6 529.9,449.8 531.8,462.6 533.4,469.9 535.3,455.7 537.2,440.8 538.8,428.6 540.5,413.6 542.3,417.4 543.8,417.9 545.6,420.0 547.5,421.6 548.8,422.5 550.7,424.5 552.6,435.0 554.4,442.9 556.1,449.5 557.7,444.2 559.9,434.5 561.6,426.1 563.4,424.1 564.5,419.5 566.4,411.9 568.0,409.8 569.3,406.9 571.0,401.0 572.5,396.8 574.4,389.9 576.2,386.3 577.7,384.3 579.6,376.8 581.1,382.5 583.0,395.6 584.8,403.6 586.4,411.6 588.0,417.8 589.8,427.6 591.4,419.6 592.7,418.4 594.3,413.0 596.2,405.8 597.6,401.0 599.3,399.2 600.9,392.2 602.1,390.2 603.8,386.3 605.2,384.4 607.0,380.7 608.8,386.2 610.2,392.5 611.7,401.5 613.2,406.5 614.8,412.2 616.4,418.2 618.3,423.3 619.9,432.0 621.4,442.2 623.0,448.0 624.6,453.0 626.3,456.9 627.7,464.2 629.2,470.4 631.1,465.6 633.2,457.5 635.0,450.0 636.4,447.3 638.0,446.0 639.4,448.8 641.0,445.0 642.6,439.5 644.5,431.1 646.3,423.4 648.2,418.3 649.8,427.6 651.4,438.6 653.0,450.0 654.9,457.7 656.3,462.8 658.2,467.7 659.7,474.5 661.3,472.0 663.1,472.2 665.0,470.0 666.5,463.5 668.2,457.0 669.8,452.5 671.2,446.0 673.0,462.1 674.7,477.2 676.6,490.7 678.5,485.4 680.0,480.0 681.9,480.3 683.7,478.2 685.4,475.8 687.1,475.5 688.6,473.8 690.0,470.0 691.4,473.3 693.1,475.1 694.5,477.2 696.3,480.6 697.6,484.0 699.4,476.3 701.1,467.5 703.0,454.8 705.0,447.4 706.5,452.3 708.4,459.7 709.8,463.6 711.6,459.6 713.2,455.1 715.1,452.0 716.6,448.7 718.3,453.0 720.0,455.5 722.0,460.0 724.0,463.3 725.4,468.5 727.4,474.5 728.8,466.7 730.3,459.0 731.8,451.2 733.5,444.7 735.2,445.9 736.7,449.4 738.2,448.8 740.0,452.0 741.9,449.8 743.6,446.8 745.2,447.6 746.9,445.4 748.7,442.1 750.4,440.6 752.3,437.1 753.8,435.0 755.4,432.7 757.2,428.4 758.8,433.1 760.3,439.0 762.0,442.9 763.3,446.0 765.1,436.9 766.9,426.7 768.7,419.6 770.2,433.3 772.1,443.3 773.9,441.6 776.1,436.6 777.8,444.3 779.2,448.1 781.0,455.0 782.9,446.1 784.3,440.4 786.3,433.9 787.8,435.7 789.8,438.6 791.6,443.9 792.8,448.0 794.6,449.6 796.4,452.8 798.0,448.3 799.5,444.9 800.9,445.1 802.8,440.5 804.3,438.7 805.6,434.2 807.3,431.1 808.7,432.4 810.2,435.6 811.7,438.4 813.4,442.7 815.0,445.0 816.8,449.4 818.4,450.8 820.2,452.4 821.4,457.7 823.3,458.3 824.9,462.3 826.5,462.2 828.3,463.4 829.9,465.5 831.7,465.0 833.5,462.5 835.0,458.8 836.9,458.8 838.4,454.2 840.0,457.0 841.9,458.9 843.3,460.5 845.2,462.3 846.8,466.2 848.6,473.0 850.4,478.4 852.0,482.6 854.1,473.7 856.0,465.0 857.8,474.1 860.1,481.2 862.1,474.4 863.7,463.2 865.5,456.9 866.8,453.1 868.6,452.5 870.0,450.0 871.8,452.7 874.0,452.0 875.7,451.8 877.0,447.7 878.4,448.0 880.0,445.0 881.7,448.6 883.5,454.1 884.9,458.2 886.6,453.2 888.4,448.6 890.1,442.6 891.7,439.3 893.4,437.9 895.0,437.1 896.3,437.7 897.9,437.1 899.7,435.3 901.1,435.9 902.9,436.6 904.5,435.7 906.0,435.3 907.6,435.0 909.3,435.9 910.8,438.6 912.4,441.5 914.2,443.7 915.6,447.7 917.4,450.1 919.2,446.6 920.6,445.7 922.3,443.3 923.6,439.1 925.5,436.9 926.9,435.2 928.3,438.0 930.1,437.2 931.8,438.3 933.6,440.6 935.8,446.8 937.7,454.2 939.5,451.2 941.5,446.9 943.1,446.0 944.8,447.3 946.3,451.9 948.1,452.5 949.9,456.9 951.6,464.9 953.4,469.7 955.2,477.8 956.7,482.6 958.1,479.1 960.0,478.8 961.2,475.2 963.1,472.1 964.5,469.1 965.8,465.2 967.5,463.6 968.9,462.9 970.6,461.4 972.3,459.3 974.2,457.8 975.6,456.9 977.2,459.1 978.7,461.3 980.5,466.2 981.9,469.4 983.7,470.4 985.4,467.4 987.1,467.3 988.6,464.8 990.2,465.1 992.0,464.0 993.6,463.2 995.0,459.1 996.7,458.2 998.2,457.6 1000.0,456.9 1001.6,455.3 1003.2,454.5 1004.6,451.0 1006.1,449.4 1007.9,445.4 1009.5,444.7 1011.3,444.3 1013.2,444.3 1015.0,441.0 1016.9,440.6 1018.6,446.4 1019.8,452.5 1021.4,458.6 1023.0,462.3 1024.7,461.0 1026.4,457.4 1028.0,453.1 1029.3,453.7 1031.0,450.0 1032.4,449.3 1034.6,448.1 1036.2,444.4 1037.7,445.1 1039.3,443.3 1040.8,444.2 1042.5,444.5 1043.7,447.4 1045.6,449.5 1047.0,448.7 1048.7,449.0 1050.0,452.0 1051.4,454.5 1053.2,454.5 1054.7,454.9 1056.1,456.1 1057.4,458.0 1058.8,460.3 1060.6,461.3 1062.2,461.9 1063.6,465.0 1065.1,465.3 1066.6,466.9 1068.0,465.2 1069.7,465.2 1071.5,466.1 1072.8,465.8 1074.2,467.9 1075.8,466.4 1077.5,466.0 1078.7,464.8 1080.3,462.9 1081.8,463.3 1083.8,462.1 1085.2,459.6 1086.7,459.6 1088.2,458.4 1089.7,456.6 1091.1,457.4 1092.9,456.6 1094.3,452.5 1095.6,454.6 1097.4,452.4 1098.7,451.9 1100.2,450.1 1101.6,449.0 1103.2,447.7 1104.8,445.1 1106.3,442.8 1107.8,442.5 1109.5,438.6 1110.9,438.6 1112.4,435.2 1114.1,435.3 1115.8,432.8 1117.2,434.3 1118.7,435.2 1120.6,432.5 1121.9,432.5 1123.6,433.0 1125.2,430.9 1126.9,430.3 1128.2,431.0 1130.0,429.8 1131.6,428.8 1133.1,428.4 1134.6,429.6 1136.3,426.7 1137.9,426.6 1139.2,426.3 1140.9,426.5 1142.3,425.0 1143.7,421.9 1145.3,423.0 1147.0,421.7 1148.9,422.8 1150.5,424.1 1152.1,423.7 1153.5,425.1 1155.2,423.8 1156.9,425.2 1158.6,425.8 1159.8,425.4 1161.6,427.1 1163.0,428.2 1164.9,428.2 1166.4,430.3 1168.3,432.5 1169.7,432.5 1171.4,434.4 1172.8,434.9 1174.4,436.3 1175.8,439.5 1177.4,440.8 1178.9,441.2 1180.5,443.3 1182.3,441.7 1184.0,440.5 1186.0,437.9 1187.8,439.2 1189.0,442.7 1190.8,443.3 1192.3,445.4 1194.0,448.3 1195.4,450.1 1197.0,450.9 1198.5,453.2 1200.1,454.1 1201.6,456.9 1203.5,458.8 1204.9,459.6 1207.0,456.2 1209.0,451.5 1210.5,451.8 1212.4,452.4 1213.7,455.3 1215.4,454.9 1217.2,457.5 1218.6,458.7 1220.4,459.0 1222.1,458.9 1223.8,460.9 1225.7,458.4 1227.4,458.5 1228.9,457.0 1230.6,454.2 1232.2,454.3 1234.2,455.0 1236.0,456.9 1237.7,456.2 1239.3,454.8 1240.4,455.5 1242.1,453.6 1243.6,453.3 1245.3,451.5 1246.9,451.5 1248.3,450.6 1250.3,449.5 1251.6,450.1 1253.4,450.0 1255.0,448.7 1256.6,449.2 1257.9,449.0 1259.3,446.8 1260.9,448.0 1262.6,448.0 1264.4,447.8 1265.7,446.0 1267.2,446.0 1269.0,445.2 1270.2,443.4 1271.7,440.8 1273.6,441.1 1275.3,439.9 1276.7,437.9 1278.0,437.6 1280.0,436.6 1281.3,434.9 1282.6,434.8 1284.6,432.7 1286.0,433.8 1287.3,432.8 1288.9,431.1 1290.4,432.3 1292.3,435.4 1293.9,435.2 1295.6,437.9 1297.9,439.4 1299.7,440.6 1301.4,439.6 1302.7,438.8 1304.2,439.3 1305.8,439.4 1307.6,438.3 1309.2,438.7 1310.5,437.9 1312.0,438.0 1314.0,439.9 1315.1,440.8 1316.9,441.0 1318.6,442.0 1320.2,441.2 1321.5,441.8 1323.3,440.5 1324.8,441.9 1326.0,441.6 1327.7,441.6 1329.2,440.5 1330.7,440.1 1332.2,440.6 1333.8,441.5 1335.2,442.2 1336.9,443.7 1338.6,445.7 1340.0,446.4 1341.7,447.4 1343.4,450.8 1345.1,456.6 1347.1,459.6 1348.8,460.1 1350.0,458.1 1351.5,458.1 1353.2,457.1 1354.7,458.4 1356.4,456.8 1357.5,457.9 1359.3,456.9 1360.8,457.2 1362.2,457.9 1363.8,458.6 1365.3,460.0 1367.2,460.3 1368.5,461.5 1370.1,462.3 1372.1,461.1 1373.9,457.9 1375.5,456.9 1377.2,456.6 1378.7,457.4 1380.3,457.1 1381.6,456.6 1383.6,458.9 1385.0,458.2 1386.8,460.9 1388.3,459.0 1390.0,459.1 1391.3,458.5 1392.6,456.6 1394.5,457.0 1396.0,455.3 1397.5,455.5 1398.8,454.6 1400.3,452.8 1401.8,451.8 1403.8,451.9 1405.3,453.4 1407.0,452.1 1408.7,451.7 1410.3,453.8 1411.9,452.3 1413.8,453.3 1415.2,452.8 1417.0,453.1 1418.7,451.6 1420.3,450.8 1421.6,449.5 1423.2,448.3 1425.0,448.5 1426.8,447.0 1428.4,446.6 1429.8,446.2 1431.5,446.0 1433.2,446.4 1434.5,445.2 1435.8,445.7 1437.7,445.9 1439.1,446.9 1440.3,445.6 1442.0,445.3 1443.4,446.4 1445.0,446.0 1446.3,446.5 1447.9,446.5 1449.3,446.9 1451.0,447.1 1452.7,446.6 1453.8,446.1 1455.7,446.9 1457.1,446.6 1458.5,446.7 1460.8,446.0 1462.6,443.3 1464.2,443.4 1465.5,441.8 1467.0,443.3 1468.9,443.3 1470.4,441.4 1471.5,441.7 1473.0,442.4 1474.8,442.0 1476.8,443.4 1478.2,443.3 1480.2,443.3 1481.9,445.3 1483.4,445.9 1485.3,449.2 1486.8,450.0 1488.3,451.5 1489.6,451.0 1491.3,450.9 1492.8,451.9 1494.6,450.7 1496.3,450.3 1497.9,451.7 1499.2,451.5 1500.9,450.1 1502.6,450.7 1504.1,448.1 1505.9,448.1 1507.6,449.4 1508.9,451.9 1510.5,453.2 1512.1,454.8 1514.0,457.8 1515.4,459.6 1517.1,460.2 1518.8,462.9 1520.5,461.7 1521.8,462.9 1523.5,465.0 1525.1,465.5 1526.7,464.9 1528.5,465.6 1530.1,465.3 1531.5,464.6 1533.0,466.1 1534.4,466.1 1536.0,465.8 1537.8,466.0 1539.2,465.4 1540.9,466.6 1542.5,466.4 1544.1,465.9 1545.7,466.4 1547.3,467.3 1549.1,466.9 1550.5,468.5 1552.2,466.8 1554.0,468.6 1556.0,468.8 1557.4,468.4 1558.8,467.1 1560.3,463.2 1562.0,462.1 1563.8,460.1 1565.5,458.3 1566.9,455.5 1568.6,453.8 1570.3,454.6 1571.9,451.6 1573.5,451.7 1575.0,450.2 1576.8,450.5 1578.4,448.4 1580.0,446.9 1581.6,445.8 1583.1,446.0 1584.4,444.3 1586.3,445.7 1587.8,444.2 1589.4,443.9 1591.1,443.1 1592.4,440.6 1594.2,440.4 1595.7,441.1 1597.0,438.8 1598.7,439.6 1600.5,439.2 1601.7,437.6 1603.4,436.6 1605.2,436.0 1606.7,435.4 1608.5,435.6 1610.0,435.9 1611.6,435.2 1613.0,436.3 1614.6,435.7 1616.3,436.6 1617.8,437.4 1619.3,436.7 1620.7,438.1 1622.0,437.9 1623.7,437.9 1625.3,437.9 1626.8,437.9 1628.7,439.6 1630.5,439.6 1632.0,440.0 1633.3,440.0 1635.3,440.4 1636.6,440.5 1638.3,440.2 1640.0,440.6 1641.8,442.1 1643.2,443.1 1644.9,443.1 1647.0,445.9 1648.5,446.0 1649.9,447.9 1651.5,448.6 1653.1,448.9 1654.7,451.3 1656.5,451.5 1657.7,452.5 1659.4,455.0 1660.8,454.8 1662.6,456.8 1663.9,456.0 1665.6,456.4 1667.3,457.9 1668.4,456.9 1670.2,457.5 1671.7,457.6 1673.3,457.8 1674.6,456.7 1676.5,455.7 1677.7,456.5 1679.2,456.1 1680.7,455.0 1682.4,455.5 1683.9,456.6 1685.7,456.6 1687.3,456.5 1689.1,457.4 1690.5,456.6 1691.9,458.3 1693.9,459.0 1695.3,458.9 1696.7,458.3 1698.4,456.4 1700.1,453.8 1702.0,453.5 1703.6,452.7 1705.2,450.6 1706.8,449.5 1708.4,449.3 1710.0,448.5 1711.9,448.5 1713.5,449.0 1715.1,449.1 1716.6,447.0 1718.6,448.5 1720.2,448.7 1721.7,447.5 1723.3,447.0 1725.1,447.8 1726.6,447.3 1728.6,445.8 1729.7,445.3 1731.7,445.2 1733.5,444.6 1735.1,444.9 1736.6,445.0 1738.4,444.2 1739.5,444.6 1741.1,444.8 1742.9,442.7 1744.3,443.0 1746.0,441.9 1747.4,442.0 1749.0,442.7 1750.5,443.4 1751.9,443.6 1753.4,445.7 1755.0,444.2 1756.5,446.4 1758.2,445.4 1759.6,447.0 1761.1,446.9 1762.9,446.4 1764.4,447.8 1765.5,447.0 1767.3,447.3 1769.1,446.3 1770.4,447.0 1772.1,445.4 1773.7,445.6 1774.8,446.5 1776.8,445.7 1778.3,444.6 1779.5,444.8 1781.2,444.0 1782.9,443.9 1784.2,444.4 1785.7,446.4 1787.1,444.9 1788.7,447.2 1790.4,447.6 1792.0,448.4 1793.4,448.0 1795.1,447.2 1796.5,448.6 1798.2,448.7 1799.9,450.7 1801.9,450.4 1803.3,450.1 1804.8,450.6 1806.5,451.2 1808.3,451.5 1810.0,451.3 1811.5,452.3 1813.2,451.3 1814.4,452.4 1816.1,451.0 1817.8,452.4 1819.5,451.2 1820.7,450.9 1822.3,450.8 1824.1,451.8 1825.3,450.5 1826.9,452.6 1828.6,451.5 1830.1,451.9 1831.6,450.1 1833.5,449.4 1834.8,450.2 1836.3,450.4 1838.1,448.8 1839.4,449.0 1841.1,449.0 1842.8,448.0 1844.4,447.9 1845.5,447.5 1847.4,446.6 1848.9,447.0 1850.6,447.3 1851.9,446.6 1853.2,446.6 1855.0,447.7 1856.5,446.2 1858.1,447.8 1859.6,447.4 1861.2,448.6 1862.5,447.5 1864.2,446.9 1865.8,447.4 1867.4,446.9 1868.9,446.1 1870.5,445.6 1872.0,445.1 1874.0,445.5 1875.5,445.0 1876.9,442.5 1878.7,443.3 1880.4,442.9 1882.0,443.5 1883.9,444.2 1885.5,443.3" stroke="#c20a0a"/>
<polyline points="66.6,400.4 68.4,396.5 70.4,392.7 72.4,388.0 74.2,391.6 75.6,401.9 77.5,406.0 79.0,441.0 81.1,453.4 83.4,468.8 84.3,300.0 85.0,128.0 86.5,160.0 88.5,213.5 90.0,267.3 92.9,303.9 95.1,333.0 97.3,377.0 98.8,406.3 99.8,440.0 101.7,403.3 104.2,411.7 106.0,403.2 107.5,395.0 109.2,389.7 110.8,388.3 112.4,399.1 113.8,405.8 116.7,375.8 118.5,364.3 120.2,350.0 122.2,362.4 124.2,373.3 126.7,371.7 128.8,382.9 130.0,389.2 132.5,396.7 135.0,403.3 137.2,410.9 139.2,423.3 141.0,415.5 142.5,406.7 144.8,441.0 146.7,444.2 148.9,452.5 150.7,458.5 153.0,482.6 155.0,502.4 156.5,473.0 158.1,438.9 159.5,400.0 160.0,365.0 161.4,393.2 163.0,418.0 165.3,465.8 168.0,455.0 169.5,468.8 171.2,475.4 172.5,489.0 175.0,468.0 176.3,473.4 178.0,482.0 179.9,499.1 181.4,517.0 184.3,458.0 186.6,475.4 188.7,495.0 190.5,506.8 192.1,520.4 194.0,534.6 195.7,544.8 197.4,499.1 199.0,451.3 200.4,400.4 202.2,438.0 204.0,482.0 205.5,518.9 207.6,492.7 209.2,465.8 210.8,487.8 212.4,513.5 213.6,534.3 215.2,560.4 218.0,555.0 220.0,550.7 221.7,541.0 223.0,538.0 224.7,529.7 226.2,528.5 228.0,519.7 229.4,517.6 231.0,496.6 232.6,479.8 234.2,465.0 235.5,443.9 237.5,463.7 239.3,475.6 241.4,495.0 243.6,487.3 245.8,484.8 247.8,510.4 250.2,537.0 252.2,519.6 253.8,508.2 256.0,490.7 257.9,470.4 260.1,444.2 261.9,422.0 263.8,430.4 265.8,439.1 267.7,446.8 269.5,453.6 271.4,459.1 272.9,466.5 274.6,470.2 276.5,477.5 278.7,445.1 280.5,409.8 282.4,380.0 284.2,381.9 286.0,382.9 287.4,381.3 289.4,376.0 291.0,376.1 292.6,374.1 295.5,391.7 298.0,434.0 299.7,416.1 301.3,401.3 302.8,382.9 304.5,389.2 306.8,403.0 308.7,409.2 311.6,439.5 313.4,412.6 315.6,385.2 317.5,359.5 319.2,351.9 321.1,346.3 323.3,359.5 326.2,414.6 328.0,424.8 330.0,434.0 331.7,447.0 333.7,458.7 335.3,475.0 337.8,460.0 339.4,446.4 341.0,444.6 342.4,438.6 344.1,437.0 346.2,441.8 348.0,449.5 349.4,447.1 351.2,443.1 352.7,443.3 354.2,457.2 355.9,473.0 357.4,468.3 359.4,482.0 361.1,496.3 363.1,475.6 364.8,491.0 366.0,511.0 367.6,527.4 369.7,524.5 371.5,522.2 372.9,531.3 374.5,543.0 376.0,556.0 378.1,547.5 379.8,534.0 381.9,524.8 384.0,537.3 385.7,548.2 387.6,545.6 389.0,543.6 390.9,543.0 392.7,546.9 394.2,553.3 396.8,523.5 398.5,526.6 400.3,530.1 402.3,532.3 403.9,537.8 405.2,528.2 407.1,516.3 408.4,501.5 409.9,512.2 411.7,516.3 413.0,526.1 415.1,514.4 416.9,498.9 418.7,495.5 420.2,491.1 422.0,488.5 423.8,478.3 425.9,473.0 428.1,458.5 430.2,446.4 432.3,436.1 434.1,430.8 436.1,442.8 437.9,454.9 439.5,463.6 441.3,456.6 442.4,450.1 444.1,440.2 445.8,433.9 447.7,425.7 449.4,419.7 451.3,408.9 453.3,415.8 455.2,424.5 456.6,424.4 458.3,421.9 459.9,418.2 461.4,412.2 463.1,411.4 464.5,406.9 466.2,401.0 467.9,409.5 469.4,411.8 470.8,421.4 472.4,427.0 473.7,427.2 475.4,432.1 477.1,435.5 478.9,424.9 480.9,411.8 482.6,404.2 483.9,406.0 485.7,412.0 487.5,431.5 489.6,455.8 491.6,453.1 492.9,446.4 494.8,440.7 496.7,437.0 498.4,445.1 500.3,450.8 502.1,458.9 503.9,442.3 506.0,427.6 507.4,434.7 509.3,440.5 510.8,448.0 512.1,440.7 513.8,437.6 515.6,430.8 517.0,426.0 518.7,431.9 520.1,435.8 521.7,441.7 523.5,436.1 525.3,429.3 527.2,421.4 528.7,425.2 530.4,432.9 531.9,437.0 533.3,434.5 535.0,435.0 536.6,430.8 538.6,422.3 540.4,416.8 542.0,407.3 543.5,415.3 545.0,425.5 546.8,434.1 548.3,440.2 550.4,430.1 552.2,418.2 553.9,422.2 555.1,426.0 556.9,429.2 558.2,423.7 560.2,419.6 561.4,416.4 563.2,415.1 564.9,411.8 566.1,413.9 567.7,412.4 569.4,408.9 571.1,410.2 572.8,408.3 574.1,407.3 575.8,398.8 577.4,395.6 578.9,387.5 580.4,383.8 582.1,390.2 583.3,390.7 585.2,397.4 586.7,399.5 588.1,406.7 589.7,418.1 591.5,425.9 592.9,435.5 594.4,430.5 596.0,426.2 597.4,422.2 599.4,417.3 600.9,411.4 602.3,408.9 604.0,407.2 605.5,402.7 607.0,399.5 608.6,403.4 610.3,403.8 611.7,408.9 613.1,413.9 615.0,416.2 616.9,428.5 618.3,441.8 620.0,452.8 621.7,444.0 623.8,437.9 625.5,438.4 627.4,436.4 629.4,440.4 631.2,437.9 633.1,443.1 635.3,446.0 637.0,445.6 638.7,440.0 640.3,437.1 642.1,436.6 643.6,435.8 645.0,435.4 646.6,436.6 648.2,435.2 649.6,444.3 651.3,450.0 652.9,456.9 655.6,446.0 657.4,454.1 659.4,459.8 661.0,466.4 663.0,468.6 665.1,469.1 667.0,464.3 668.6,462.0 670.2,454.9 671.9,451.5 673.6,457.7 675.6,464.0 677.3,467.7 679.5,464.0 681.3,462.3 683.2,463.4 685.4,466.4 687.3,463.8 689.5,459.6 691.4,465.9 692.9,469.1 694.4,465.7 696.2,459.6 698.2,468.1 700.3,477.2 702.2,467.1 703.7,461.3 705.7,451.5 707.6,453.0 709.8,455.5 711.6,455.7 713.2,454.0 715.2,454.2 717.0,458.6 718.7,463.5 720.6,467.7 722.6,471.4 724.2,474.4 726.0,479.9 727.5,473.7 729.1,467.8 731.1,458.0 732.8,452.3 734.2,446.0 736.0,449.0 737.4,450.8 739.3,453.3 740.9,454.2 742.6,453.8 744.7,452.1 746.3,450.1 748.0,451.0 749.7,454.3 751.5,457.9 753.1,459.6 754.7,455.0 756.3,453.3 757.7,450.9 759.5,444.6 761.2,441.3 762.6,439.3 764.1,436.1 765.8,431.4 767.3,427.1 768.9,429.3 770.3,430.6 771.7,435.0 773.4,436.6 775.2,441.8 776.9,446.2 778.4,451.4 780.2,456.9 782.2,452.4 783.8,450.5 785.6,448.7 787.5,449.1 789.1,450.2 791.0,451.5 792.7,450.8 794.3,449.4 795.9,445.5 797.8,444.7 799.1,441.5 801.0,442.1 802.3,438.3 803.9,438.7 805.7,436.9 807.1,432.9 808.6,432.5 810.2,433.4 812.0,436.8 813.6,437.6 815.4,440.6 817.1,441.1 818.7,446.6 820.4,447.0 821.8,450.0 823.4,453.7 824.9,454.2 826.7,452.1 828.5,451.4 830.1,450.9 831.7,448.7 833.1,448.7 835.1,446.7 836.7,445.6 838.4,444.7 839.9,446.8 841.6,448.8 843.6,450.6 845.2,452.8 846.9,457.0 848.6,456.3 850.2,460.6 851.5,462.0 853.3,465.0 855.0,459.8 856.9,459.4 858.7,454.2 860.3,454.9 862.2,451.5 864.0,452.6 865.5,451.5 867.2,452.8 868.6,451.8 870.0,452.8 872.2,455.1 874.1,454.2 876.0,451.6 877.6,449.4 878.9,445.3 880.8,444.7 882.4,445.8 884.2,449.2 886.2,451.5 887.9,449.7 889.4,448.3 891.0,445.7 892.9,443.5 894.4,442.0 895.9,444.5 897.9,443.5 899.4,445.1 901.1,446.0 902.8,444.7 904.1,444.4 906.2,443.9 907.6,443.8 909.3,444.7 910.8,443.1 912.6,442.7 914.1,442.2 916.0,443.3 917.7,444.6 919.4,444.2 921.5,447.4 923.1,446.7 925.0,445.0 926.5,446.0 928.2,446.0 929.6,449.9 931.3,448.8 933.1,451.3 934.8,454.1 936.4,456.9 938.2,453.8 940.4,454.2 942.1,454.2 943.7,455.9 945.4,456.1 946.6,456.9 948.5,459.2 949.9,459.6 951.5,462.1 953.4,469.5 955.0,469.9 956.7,475.8 958.1,474.5 959.8,474.6 961.3,477.2 963.4,475.8 964.8,477.2 967.0,473.7 968.8,470.4 970.8,472.5 972.7,469.6 974.3,471.8 975.9,470.5 977.9,466.8 979.2,468.0 981.0,465.0 982.6,465.5 984.6,467.5 986.5,467.7 988.7,463.8 990.5,462.3 992.4,465.5 994.3,467.0 995.9,469.1 997.9,466.3 999.5,463.5 1001.3,462.3 1003.0,460.0 1004.4,456.5 1006.2,455.9 1007.7,452.8 1009.2,449.7 1010.8,448.7 1012.6,447.2 1014.2,450.4 1016.0,448.2 1017.6,450.1 1019.3,453.4 1021.4,455.6 1023.3,456.0 1025.0,458.2 1026.7,456.7 1028.0,453.0 1029.4,450.7 1031.1,448.7 1033.0,446.1 1034.4,445.1 1035.8,446.0 1037.5,442.7 1039.3,443.3 1040.8,445.9 1042.7,445.5 1044.2,451.2 1046.0,451.5 1047.5,450.9 1049.2,450.9 1051.0,450.1 1052.6,447.0 1054.2,447.4 1055.7,447.4 1057.6,449.2 1058.8,454.0 1060.5,455.4 1062.3,455.5 1063.6,455.7 1065.2,457.4 1066.9,457.1 1068.5,458.3 1069.8,457.6 1071.4,456.0 1073.1,458.2 1074.5,458.2 1076.3,455.4 1077.9,454.7 1079.6,451.6 1081.2,451.5 1082.8,451.2 1084.3,451.1 1086.2,450.4 1087.8,450.8 1089.4,450.1 1090.9,452.6 1093.0,455.6 1094.4,457.7 1096.1,462.3 1097.5,459.4 1099.5,460.0 1101.0,459.4 1102.5,457.6 1104.0,454.1 1105.6,452.8 1107.5,451.0 1109.2,446.0 1110.8,442.3 1112.4,439.3 1114.2,440.9 1115.5,440.9 1117.0,437.8 1118.8,438.5 1120.3,439.8 1121.9,439.3 1123.3,440.8 1125.0,440.1 1126.7,441.8 1128.5,440.7 1130.0,442.0 1131.8,436.6 1133.1,435.1 1134.8,433.4 1136.3,435.2 1138.1,435.3 1139.8,434.1 1141.0,430.6 1142.6,431.1 1144.0,430.2 1145.7,429.7 1147.2,430.1 1148.7,427.9 1150.5,428.0 1151.8,425.9 1153.4,425.7 1155.6,427.9 1157.5,432.5 1159.4,430.5 1161.6,428.4 1163.6,430.3 1165.6,433.9 1167.4,431.1 1169.7,429.8 1171.8,431.8 1173.7,433.9 1175.5,435.4 1177.1,434.3 1178.2,435.0 1179.9,436.6 1181.3,437.9 1182.8,438.1 1184.6,439.3 1187.3,435.2 1188.8,437.3 1190.5,437.3 1191.9,439.1 1193.8,441.1 1195.4,442.0 1197.1,443.7 1198.4,443.0 1200.2,445.6 1201.6,446.6 1203.1,446.3 1204.5,446.6 1206.2,448.7 1208.0,448.7 1209.8,446.6 1211.4,446.7 1213.0,444.7 1214.7,445.8 1216.0,446.4 1217.4,446.5 1219.2,449.3 1220.6,448.7 1222.1,449.7 1223.8,450.5 1225.2,451.5 1227.0,449.9 1228.3,449.9 1230.0,449.9 1231.8,449.3 1233.3,447.4 1235.1,445.6 1236.7,446.2 1238.4,444.8 1240.1,444.7 1241.9,446.4 1243.3,446.5 1245.1,446.8 1246.9,447.4 1248.6,448.0 1250.0,445.8 1251.6,445.3 1252.8,446.4 1254.3,444.6 1256.1,445.7 1257.3,444.0 1258.8,442.9 1260.4,443.3 1261.9,443.9 1263.4,441.6 1265.1,440.7 1266.9,441.7 1268.5,440.6 1270.5,442.3 1272.3,442.1 1274.0,444.7 1275.4,445.1 1276.8,442.6 1278.5,441.9 1280.0,440.6 1281.4,442.0 1282.8,441.1 1284.3,440.6 1286.1,439.0 1287.5,437.9 1289.0,437.5 1291.0,438.5 1292.4,440.7 1294.3,440.6 1296.3,441.3 1298.1,444.3 1299.7,446.0 1301.2,444.6 1302.8,446.3 1304.3,443.8 1305.9,443.3 1307.5,444.7 1309.2,443.3 1310.5,442.9 1312.4,445.2 1314.0,443.7 1315.2,445.7 1316.8,445.5 1318.2,444.2 1319.7,446.3 1321.3,446.0 1323.0,445.8 1324.4,445.3 1325.9,444.9 1327.7,443.7 1329.1,445.1 1330.8,442.9 1332.2,443.3 1334.2,445.5 1335.6,445.5 1337.6,447.4 1339.1,446.8 1341.2,448.1 1342.8,447.8 1344.0,450.1 1346.0,450.9 1347.6,450.2 1349.3,449.6 1350.9,450.9 1352.5,451.5 1353.8,451.6 1355.4,451.2 1356.9,450.6 1358.4,451.1 1360.2,451.8 1361.7,451.4 1362.9,451.6 1364.4,449.4 1366.0,450.1 1367.6,450.9 1369.0,450.8 1370.6,451.8 1372.2,450.8 1373.8,452.0 1375.6,451.4 1376.9,451.5 1378.5,451.5 1379.9,450.8 1381.9,451.3 1383.2,451.2 1385.0,450.1 1386.4,452.6 1387.9,452.1 1389.5,454.2 1391.0,454.4 1392.5,453.7 1394.2,451.8 1395.5,451.5 1397.1,450.5 1398.7,451.0 1400.2,448.5 1401.7,448.7 1403.1,448.7 1404.8,448.5 1406.0,449.2 1407.6,448.8 1409.2,451.3 1410.7,451.1 1412.4,451.7 1413.9,451.0 1415.2,451.5 1416.9,450.2 1418.6,450.4 1420.1,451.2 1421.6,449.1 1423.5,449.7 1424.8,447.9 1426.5,447.4 1428.4,447.5 1429.8,447.5 1431.5,447.4 1433.1,448.3 1434.8,449.9 1436.3,449.7 1438.2,452.2 1439.6,452.8 1440.9,452.6 1442.8,453.8 1444.0,451.3 1445.8,452.2 1447.5,453.1 1448.8,452.0 1450.4,453.1 1451.8,451.8 1453.3,452.3 1454.8,452.9 1456.6,452.0 1457.9,451.0 1459.6,452.5 1461.2,451.5 1462.8,450.9 1464.6,451.7 1465.9,450.5 1467.3,452.1 1468.8,451.1 1470.6,450.6 1472.1,450.8 1473.7,452.2 1475.3,452.1 1476.5,450.9 1478.1,451.9 1479.4,453.6 1481.0,453.8 1482.8,452.5 1484.3,453.6 1485.6,454.2 1487.1,453.4 1488.6,454.1 1490.4,454.8 1492.3,452.9 1493.7,453.6 1495.2,453.2 1496.9,454.2 1498.6,452.7 1500.1,453.4 1501.9,453.5 1503.4,453.3 1505.0,453.6 1506.5,454.9 1507.7,455.6 1509.3,455.5 1510.9,456.1 1512.4,455.1 1514.0,457.4 1515.4,456.9 1517.1,457.9 1518.7,459.6 1520.6,458.8 1522.2,460.3 1523.9,461.7 1525.3,461.9 1526.9,460.2 1528.6,460.8 1530.2,461.6 1531.7,461.6 1533.0,461.1 1535.0,460.4 1536.3,460.7 1537.8,459.2 1539.5,459.4 1540.8,457.1 1542.5,457.5 1544.1,458.1 1545.4,459.4 1547.2,459.0 1548.7,460.1 1550.1,459.3 1551.3,460.7 1553.1,460.3 1554.5,461.3 1556.0,461.6 1557.4,460.4 1559.1,458.0 1560.5,456.8 1562.1,455.6 1563.6,453.1 1565.2,451.5 1566.9,450.1 1568.6,449.0 1569.9,449.8 1571.6,449.7 1573.2,448.6 1575.0,450.4 1576.8,449.3 1578.2,448.1 1579.7,448.5 1581.7,447.9 1583.1,448.7 1584.8,448.2 1586.1,447.2 1587.9,446.6 1589.2,446.9 1590.5,445.8 1592.4,446.7 1593.8,446.6 1595.0,445.6 1596.7,444.7 1598.3,443.4 1599.7,444.6 1601.1,443.5 1602.5,442.7 1604.1,441.7 1605.6,442.0 1607.3,440.5 1608.8,439.7 1610.2,439.3 1612.0,439.1 1613.5,440.3 1615.0,439.4 1616.5,441.2 1618.2,441.9 1619.9,442.8 1621.7,442.6 1623.1,441.4 1624.8,443.5 1626.4,443.3 1628.1,442.6 1629.3,444.5 1631.1,443.3 1632.6,442.5 1634.0,443.7 1635.5,442.5 1636.8,443.6 1638.7,442.4 1640.0,443.3 1641.5,443.1 1643.5,444.7 1645.1,446.9 1646.9,446.0 1648.5,447.4 1650.2,447.2 1651.5,449.8 1653.0,449.2 1654.7,450.9 1656.5,451.3 1658.0,453.0 1659.4,454.2 1661.1,454.3 1662.6,454.2 1663.9,454.6 1665.7,454.6 1667.0,454.9 1668.5,454.9 1670.2,455.5 1671.8,455.5 1673.3,454.8 1674.5,454.1 1676.2,454.4 1677.9,454.5 1679.5,455.2 1681.0,455.5 1682.4,454.8 1683.9,454.9 1685.4,454.3 1687.1,455.6 1688.3,456.9 1690.1,456.4 1691.5,455.5 1693.3,455.8 1694.6,456.9 1696.1,457.1 1697.5,454.8 1699.2,453.2 1700.9,452.6 1702.0,451.7 1703.5,451.3 1705.5,450.7 1706.8,448.7 1708.2,449.5 1710.1,449.3 1711.7,449.3 1713.5,450.1 1715.0,449.7 1716.6,449.9 1718.2,449.2 1719.9,446.4 1721.7,446.7 1723.5,446.6 1725.1,446.3 1726.7,445.0 1728.4,445.8 1730.2,444.4 1731.4,445.8 1733.5,445.0 1735.0,445.1 1736.6,444.7 1738.1,444.2 1739.7,442.8 1741.1,444.1 1742.7,443.1 1744.2,442.4 1745.9,443.0 1747.4,442.0 1749.2,442.4 1750.3,442.6 1751.8,442.9 1753.5,444.3 1754.9,443.7 1756.3,444.2 1758.1,444.9 1759.6,446.0 1761.3,446.2 1762.6,445.8 1764.0,446.6 1765.9,445.7 1767.4,445.5 1768.7,445.3 1770.4,446.0 1771.8,446.2 1773.6,446.4 1774.8,446.4 1776.6,445.4 1778.1,445.4 1779.5,445.2 1781.2,445.4 1782.8,446.2 1784.5,445.2 1786.0,446.9 1787.4,447.6 1788.6,447.3 1790.5,446.0 1791.9,448.2 1793.4,447.4 1795.0,448.6 1796.9,448.0 1798.2,447.9 1800.2,448.7 1801.6,449.2 1803.5,449.1 1804.7,451.1 1806.6,450.1 1808.3,450.8 1810.3,448.9 1811.7,449.0 1813.7,446.7 1815.2,446.2 1817.1,446.4 1818.7,446.8 1820.0,446.7 1821.7,447.8 1823.2,447.8 1824.8,448.8 1826.7,448.8 1828.3,447.3 1829.6,447.8 1831.3,448.7 1832.7,449.6 1834.6,449.3 1836.0,447.2 1837.5,446.9 1839.3,447.2 1840.5,448.7 1842.2,447.4 1843.7,447.9 1845.5,446.8 1847.0,446.9 1848.9,445.4 1850.4,445.2 1852.0,445.9 1853.3,444.9 1855.0,444.8 1856.6,445.7 1857.8,445.9 1859.3,446.0 1861.0,446.3 1862.5,446.7 1864.0,446.1 1865.6,447.2 1867.1,447.0 1868.7,445.4 1870.0,447.0 1871.7,445.8 1873.3,446.0 1874.8,446.7 1876.3,445.3 1877.8,444.3 1879.4,445.3 1880.9,445.1 1882.4,445.5 1883.8,446.0 1885.5,444.7" stroke="#0a0aa0"/>
</g></svg>
<div class="a" style="left:64px;top:330.75px;width:1822px;height:1.5px;background:#111;"></div>
<div class="a" style="left:30px;top:323px;width:35px;height:18.5px;border:1.7px solid #2a2aff;background:#fff;box-sizing:border-box;"></div>
<div class="t" style="left:-254.2px;width:600px;text-align:center;top:325.0px;font-size:14px;line-height:15.64px;color:#2a2aff;letter-spacing:-0.6px;">37,1</div>
<div class="a" style="left:65.5px;top:801px;width:2px;height:8px;background:#1e1e1e;"></div>
<div class="a" style="left:44.5px;top:808.5px;width:43.5px;height:19.5px;border:1.7px solid #2a2aff;background:#fff;box-sizing:border-box;"></div>
<div class="t" style="left:-234.0px;width:600px;text-align:center;top:811.0px;font-size:14px;line-height:15.64px;color:#2a2aff;letter-spacing:-0.3px;">-2,1m</div>
<div class="a" style="left:68px;top:101px;width:31px;height:59px;background:rgba(255,255,255,0.55);"></div>
<svg class="a" style="left:70px;top:101px" width="28" height="28" viewBox="0 0 28 28">
<path d="M9 22 L22 22 L15 13 Z" fill="rgba(200,200,210,0.25)"/>
<circle cx="10.5" cy="8.5" r="5.8" fill="#ececf0" stroke="#bcbcbc" stroke-width="1.1"/>
<path d="M14.6 12.6 L22 21" stroke="#8a8a8a" stroke-width="1.6"/>
<g transform="translate(7.8,18.6)"><circle r="4.5" fill="#0a2a9a"/><path d="M-2.3 0 h4.6 M0 -2.3 v4.6" stroke="#fff" stroke-width="1.7"/></g>
</svg>
<svg class="a" style="left:70px;top:130.5px" width="28" height="28" viewBox="0 0 28 28">
<path d="M9 22 L22 22 L15 13 Z" fill="rgba(200,200,210,0.25)"/>
<circle cx="10.5" cy="8.5" r="5.8" fill="#ececf0" stroke="#bcbcbc" stroke-width="1.1"/>
<path d="M14.6 12.6 L22 21" stroke="#8a8a8a" stroke-width="1.6"/>
<g transform="translate(7.8,18.6)"><circle r="4.5" fill="#0a2a9a"/><path d="M-2.4 0 h4.8" stroke="#fff" stroke-width="1.9"/></g>
</svg>
<svg class="a" style="left:1821px;top:770.5px" width="28" height="28" viewBox="0 0 28 28">
<path d="M9 22 L22 22 L15 13 Z" fill="rgba(200,200,210,0.25)"/>
<circle cx="10.5" cy="8.5" r="5.8" fill="#ececf0" stroke="#bcbcbc" stroke-width="1.1"/>
<path d="M14.6 12.6 L22 21" stroke="#8a8a8a" stroke-width="1.6"/>
<g transform="translate(7.8,18.6)"><circle r="4.5" fill="#0a2a9a"/><path d="M-2.4 0 h4.8" stroke="#fff" stroke-width="1.9"/></g>
</svg>
<svg class="a" style="left:1853.5px;top:770.5px" width="28" height="28" viewBox="0 0 28 28">
<path d="M9 22 L22 22 L15 13 Z" fill="rgba(200,200,210,0.25)"/>
<circle cx="10.5" cy="8.5" r="5.8" fill="#ececf0" stroke="#bcbcbc" stroke-width="1.1"/>
<path d="M14.6 12.6 L22 21" stroke="#8a8a8a" stroke-width="1.6"/>
<g transform="translate(7.8,18.6)"><circle r="4.5" fill="#0a2a9a"/><path d="M-2.3 0 h4.6 M0 -2.3 v4.6" stroke="#fff" stroke-width="1.7"/></g>
</svg>
<div class="a" style="left:69px;top:162px;width:77px;height:29px;border:1px solid #9a9a9a;background:#fff;box-sizing:border-box;"></div>
<div class="a" style="left:123px;top:163px;width:22px;height:27px;border-left:1px solid #a0a0a0;background:linear-gradient(#f4f4f4,#d4d4d4);box-sizing:border-box;"></div>
<svg class="a" style="left:126px;top:171px" width="16" height="10"><path d="M2 2 h11 l-5.5 6 z" fill="#333"/></svg>
<div class="t" style="left:78.0px;top:169.3px;font-size:14px;line-height:15.64px;color:#111;">% FS</div>
<div class="a" style="left:172px;top:835px;width:1585px;height:188px;background:#fff;box-shadow:inset 2px 2px 2px rgba(0,0,0,0.45);"></div>
<div class="a" style="left:1757px;top:835px;width:3px;height:188px;background:linear-gradient(90deg,#c4c4c4,#dadada);"></div>
<div class="a" style="left:178px;top:840px;width:19px;height:19px;border-radius:3px;border:1px solid #8a8a8a;background:linear-gradient(#f8f8f8,#dcdcdc);box-shadow:inset 0 -1px 1px rgba(0,0,0,0.3);box-sizing:border-box;"></div>
<div class="t" style="left:204.0px;top:843.3px;font-size:14px;line-height:15.64px;color:#cc1f25;">1: L1 [FDW]</div>
<div class="t" style="right:1400.0px;top:843.3px;font-size:14px;line-height:15.64px;color:#cc1f25;">2,8 %</div>
<div class="a" style="left:571px;top:840px;width:19px;height:19px;border-radius:3px;border:1px solid #8a8a8a;background:linear-gradient(#f8f8f8,#dcdcdc);box-shadow:inset 0 -1px 1px rgba(0,0,0,0.3);box-sizing:border-box;"></div>
<div class="t" style="left:597.0px;top:843.3px;font-size:14px;line-height:15.64px;color:#2b8350;">2: R1 [FDW]</div>
<div class="t" style="right:1007.0px;top:843.3px;font-size:14px;line-height:15.64px;color:#2b8350;">7,7 %</div>
<div class="a" style="left:964px;top:840px;width:19px;height:19px;border-radius:3px;border:1px solid #8a8a8a;background:linear-gradient(#f8f8f8,#dcdcdc);box-shadow:inset 0 -1px 1px rgba(0,0,0,0.3);box-sizing:border-box;"></div>
<div class="t" style="left:990.0px;top:843.3px;font-size:14px;line-height:15.64px;color:#5353e0;">3: LR1 [FDW]</div>
<div class="t" style="right:614.0px;top:843.3px;font-size:14px;line-height:15.64px;color:#5353e0;">5,5 %</div>
<div class="a" style="left:1357px;top:840px;width:19px;height:19px;border-radius:3px;border:1px solid #8a8a8a;background:linear-gradient(#f8f8f8,#dcdcdc);box-shadow:inset 0 -1px 1px rgba(0,0,0,0.3);box-sizing:border-box;"></div>
<div class="t" style="left:1383.0px;top:843.3px;font-size:14px;line-height:15.64px;color:#ef8a2e;">4: Lc [FDW]</div>
<div class="t" style="right:221.0px;top:843.3px;font-size:14px;line-height:15.64px;color:#ef8a2e;">9,1 %</div>
<div class="a" style="left:178px;top:871px;width:19px;height:19px;border-radius:3px;border:1px solid #8a8a8a;background:linear-gradient(#f8f8f8,#dcdcdc);box-shadow:inset 0 -1px 1px rgba(0,0,0,0.3);box-sizing:border-box;"></div>
<div class="t" style="left:204.0px;top:874.3px;font-size:14px;line-height:15.64px;color:#1fa31f;">5: Rc [FDW]</div>
<div class="t" style="right:1400.0px;top:874.3px;font-size:14px;line-height:15.64px;color:#1fa31f;">14,4 %</div>
<div class="a" style="left:571px;top:871px;width:19px;height:19px;border-radius:3px;border:1px solid #8a8a8a;background:linear-gradient(#f8f8f8,#dcdcdc);box-shadow:inset 0 -1px 1px rgba(0,0,0,0.3);box-sizing:border-box;"></div>
<div class="t" style="left:597.0px;top:874.3px;font-size:14px;line-height:15.64px;color:#3a7fe0;">6: LRc [FDW]</div>
<div class="t" style="right:1007.0px;top:874.3px;font-size:14px;line-height:15.64px;color:#3a7fe0;">11,9 %</div>
<div class="a" style="left:964px;top:871px;width:19px;height:19px;border-radius:3px;border:1px solid #8a8a8a;background:linear-gradient(#f8f8f8,#dcdcdc);box-shadow:inset 0 -1px 1px rgba(0,0,0,0.3);box-sizing:border-box;"></div>
<div class="t" style="left:990.0px;top:874.3px;font-size:14px;line-height:15.64px;color:#a0642a;">7: Lb [FDW]</div>
<div class="t" style="right:614.0px;top:874.3px;font-size:14px;line-height:15.64px;color:#a0642a;">4,0 %</div>
<div class="a" style="left:1357px;top:871px;width:19px;height:19px;border-radius:3px;border:1px solid #8a8a8a;background:linear-gradient(#f8f8f8,#dcdcdc);box-shadow:inset 0 -1px 1px rgba(0,0,0,0.3);box-sizing:border-box;"></div>
<div class="t" style="left:1383.0px;top:874.3px;font-size:14px;line-height:15.64px;color:#26a0a0;">8: Rb [FDW]</div>
<div class="t" style="right:221.0px;top:874.3px;font-size:14px;line-height:15.64px;color:#26a0a0;">11,4 %</div>
<div class="a" style="left:178px;top:902px;width:19px;height:19px;border-radius:3px;border:1px solid #8a8a8a;background:linear-gradient(#f8f8f8,#dcdcdc);box-shadow:inset 0 -1px 1px rgba(0,0,0,0.3);box-sizing:border-box;"></div>
<div class="t" style="left:204.0px;top:905.3px;font-size:14px;line-height:15.64px;color:#8a36e8;">9: LRb [FDW]</div>
<div class="t" style="right:1400.0px;top:905.3px;font-size:14px;line-height:15.64px;color:#8a36e8;">7,9 %</div>
<div class="a" style="left:571px;top:902px;width:19px;height:19px;border-radius:3px;border:1px solid #8a8a8a;background:linear-gradient(#f8f8f8,#dcdcdc);box-shadow:inset 0 -1px 1px rgba(0,0,0,0.3);box-sizing:border-box;"></div>
<svg class="a" style="left:571px;top:902px" width="19" height="19"><path d="M4.5 9.5 l3.2 5 l6.5 -12" stroke="#000" stroke-width="2.2" fill="none"/></svg>
<div class="t" style="left:597.0px;top:905.3px;font-size:14px;line-height:15.64px;color:#21a121;">10: Lsweet [FDW]</div>
<div class="t" style="right:1007.0px;top:905.3px;font-size:14px;line-height:15.64px;color:#21a121;">2,0 %</div>
<div class="a" style="left:784px;top:911.2px;width:43px;height:3px;background:#14a014;"></div>
<div class="a" style="left:964px;top:902px;width:19px;height:19px;border-radius:3px;border:1px solid #8a8a8a;background:linear-gradient(#f8f8f8,#dcdcdc);box-shadow:inset 0 -1px 1px rgba(0,0,0,0.3);box-sizing:border-box;"></div>
<svg class="a" style="left:964px;top:902px" width="19" height="19"><path d="M4.5 9.5 l3.2 5 l6.5 -12" stroke="#000" stroke-width="2.2" fill="none"/></svg>
<div class="t" style="left:990.0px;top:905.3px;font-size:14px;line-height:15.64px;color:#c8151f;">11: R sweet [FDW]</div>
<div class="t" style="right:614.0px;top:905.3px;font-size:14px;line-height:15.64px;color:#c8151f;">10,0 %</div>
<div class="a" style="left:1177px;top:911.2px;width:43px;height:3px;background:#c00a14;"></div>
<div class="a" style="left:1357px;top:902px;width:19px;height:19px;border-radius:3px;border:1px solid #8a8a8a;background:linear-gradient(#f8f8f8,#dcdcdc);box-shadow:inset 0 -1px 1px rgba(0,0,0,0.3);box-sizing:border-box;"></div>
<svg class="a" style="left:1357px;top:902px" width="19" height="19"><path d="M4.5 9.5 l3.2 5 l6.5 -12" stroke="#000" stroke-width="2.2" fill="none"/></svg>
<div class="t" style="left:1383.0px;top:905.3px;font-size:14px;line-height:15.64px;color:#14149c;">12: L+R sweet [FDW]</div>
<div class="t" style="right:221.0px;top:905.3px;font-size:14px;line-height:15.64px;color:#14149c;">6,5 %</div>
<div class="a" style="left:1570px;top:911.2px;width:43px;height:3px;background:#0a0aa0;"></div>
<div class="a" style="left:178px;top:933px;width:19px;height:19px;border-radius:3px;border:1px solid #8a8a8a;background:linear-gradient(#f8f8f8,#dcdcdc);box-shadow:inset 0 -1px 1px rgba(0,0,0,0.3);box-sizing:border-box;"></div>
<div class="t" style="left:204.0px;top:936.3px;font-size:14px;line-height:15.64px;color:#4856d8;">13: LR head1 [FDW]</div>
<div class="t" style="right:1400.0px;top:936.3px;font-size:14px;line-height:15.64px;color:#4856d8;">63,3 %</div>
<div class="a" style="left:571px;top:933px;width:19px;height:19px;border-radius:3px;border:1px solid #8a8a8a;background:linear-gradient(#f8f8f8,#dcdcdc);box-shadow:inset 0 -1px 1px rgba(0,0,0,0.3);box-sizing:border-box;"></div>
<div class="t" style="left:597.0px;top:936.3px;font-size:14px;line-height:15.64px;color:#ef8a2e;">14: LR head2 [FDW]</div>
<div class="t" style="right:1007.0px;top:936.3px;font-size:14px;line-height:15.64px;color:#ef8a2e;">63,5 %</div>
<div class="a" style="left:964px;top:933px;width:19px;height:19px;border-radius:3px;border:1px solid #8a8a8a;background:linear-gradient(#f8f8f8,#dcdcdc);box-shadow:inset 0 -1px 1px rgba(0,0,0,0.3);box-sizing:border-box;"></div>
<div class="t" style="left:990.0px;top:936.3px;font-size:14px;line-height:15.64px;color:#1fa331;">15: LR near sweet [FDW]</div>
<div class="t" style="right:614.0px;top:936.3px;font-size:14px;line-height:15.64px;color:#1fa331;">41,0 %</div>
<div class="a" style="left:1357px;top:933px;width:19px;height:19px;border-radius:3px;border:1px solid #8a8a8a;background:linear-gradient(#f8f8f8,#dcdcdc);box-shadow:inset 0 -1px 1px rgba(0,0,0,0.3);box-sizing:border-box;"></div>
<div class="t" style="left:1383.0px;top:936.3px;font-size:14px;line-height:15.64px;color:#2a7ad8;">16: LR off [FDW]</div>
<div class="t" style="right:221.0px;top:936.3px;font-size:14px;line-height:15.64px;color:#2a7ad8;">14,4 %</div>
<div class="a" style="left:178px;top:964px;width:19px;height:19px;border-radius:3px;border:1px solid #8a8a8a;background:linear-gradient(#f8f8f8,#dcdcdc);box-shadow:inset 0 -1px 1px rgba(0,0,0,0.3);box-sizing:border-box;"></div>
<div class="t" style="left:204.0px;top:967.3px;font-size:14px;line-height:15.64px;color:#a06020;">17: LR near sats [FDW]</div>
<div class="t" style="right:1400.0px;top:967.3px;font-size:14px;line-height:15.64px;color:#a06020;">1,3 %</div>
<div class="a" style="left:571px;top:964px;width:19px;height:19px;border-radius:3px;border:1px solid #8a8a8a;background:linear-gradient(#f8f8f8,#dcdcdc);box-shadow:inset 0 -1px 1px rgba(0,0,0,0.3);box-sizing:border-box;"></div>
<div class="t" style="left:597.0px;top:967.3px;font-size:14px;line-height:15.64px;color:#26999e;">18: LR standup rand...[FDW]</div>
<div class="t" style="right:1007.0px;top:967.3px;font-size:14px;line-height:15.64px;color:#26999e;">-0,4 %</div>
<div class="a" style="left:964px;top:964px;width:19px;height:19px;border-radius:3px;border:1px solid #c8c8c8;background:#dedede;box-sizing:border-box;"></div>
<svg class="a" style="left:964px;top:964px" width="19" height="19"><path d="M4.5 9 l3 5 l6 -11" stroke="#b4b4b4" stroke-width="1.6" fill="none"/></svg>
<div class="t" style="left:990.0px;top:967.3px;font-size:14px;line-height:15.64px;color:#a8a8a8;">19: L+R Mic door</div>
<div class="t" style="right:614.0px;top:967.3px;font-size:14px;line-height:15.64px;color:#a8a8a8;">%</div>
<div class="a" style="left:1357px;top:964px;width:19px;height:19px;border-radius:3px;border:1px solid #c8c8c8;background:#dedede;box-sizing:border-box;"></div>
<svg class="a" style="left:1357px;top:964px" width="19" height="19"><path d="M4.5 9 l3 5 l6 -11" stroke="#b4b4b4" stroke-width="1.6" fill="none"/></svg>
<div class="t" style="left:1383.0px;top:967.3px;font-size:14px;line-height:15.64px;color:#a8a8a8;">20: L  mic no added eq</div>
<div class="t" style="right:221.0px;top:967.3px;font-size:14px;line-height:15.64px;color:#a8a8a8;">%</div>
<div class="a" style="left:178px;top:995px;width:19px;height:19px;border-radius:3px;border:1px solid #c8c8c8;background:#dedede;box-sizing:border-box;"></div>
<svg class="a" style="left:178px;top:995px" width="19" height="19"><path d="M4.5 9 l3 5 l6 -11" stroke="#b4b4b4" stroke-width="1.6" fill="none"/></svg>
<div class="t" style="left:204.0px;top:998.3px;font-size:14px;line-height:15.64px;color:#a8a8a8;">21: L+R mic standup</div>
<div class="t" style="right:1400.0px;top:998.3px;font-size:14px;line-height:15.64px;color:#a8a8a8;">%</div>
<div class="a" style="left:571px;top:995px;width:19px;height:19px;border-radius:3px;border:1px solid #c8c8c8;background:#dedede;box-sizing:border-box;"></div>
<svg class="a" style="left:571px;top:995px" width="19" height="19"><path d="M4.5 9 l3 5 l6 -11" stroke="#b4b4b4" stroke-width="1.6" fill="none"/></svg>
<div class="t" style="left:597.0px;top:998.3px;font-size:14px;line-height:15.64px;color:#a8a8a8;">22: L+R mic headbed</div>
<div class="t" style="right:1007.0px;top:998.3px;font-size:14px;line-height:15.64px;color:#a8a8a8;">%</div>
<div class="a" style="left:964px;top:995px;width:19px;height:19px;border-radius:3px;border:1px solid #c8c8c8;background:#dedede;box-sizing:border-box;"></div>
<svg class="a" style="left:964px;top:995px" width="19" height="19"><path d="M4.5 9 l3 5 l6 -11" stroke="#b4b4b4" stroke-width="1.6" fill="none"/></svg>
<div class="t" style="left:990.0px;top:998.3px;font-size:14px;line-height:15.64px;color:#a8a8a8;">23: L+R mic around</div>
<div class="t" style="right:614.0px;top:998.3px;font-size:14px;line-height:15.64px;color:#a8a8a8;">%</div>
<div class="a" style="left:1357px;top:995px;width:19px;height:19px;border-radius:3px;border:1px solid #c8c8c8;background:#dedede;box-sizing:border-box;"></div>
<svg class="a" style="left:1357px;top:995px" width="19" height="19"><path d="M4.5 9 l3 5 l6 -11" stroke="#b4b4b4" stroke-width="1.6" fill="none"/></svg>
<div class="t" style="left:1383.0px;top:998.3px;font-size:14px;line-height:15.64px;color:#a8a8a8;">24: R mic ss</div>
<div class="t" style="right:221.0px;top:998.3px;font-size:14px;line-height:15.64px;color:#a8a8a8;">%</div>
<div class="a" style="left:1762px;top:832px;width:21px;height:191px;border:1px solid #8a8a8a;background:#fff;box-sizing:border-box;"></div>
<div class="a" style="left:1763px;top:833px;width:19px;height:19px;border-bottom:1px solid #8a8a8a;background:linear-gradient(90deg,#fafafa,#e4e4e4);box-sizing:border-box;"></div>
<svg class="a" style="left:1763px;top:833px" width="19" height="19"><path d="M5 12 h9 l-4.5 -5 z" fill="#333"/></svg>
<div class="a" style="left:1763px;top:852px;width:19px;height:135px;border-bottom:1px solid #9a9a9a;background:linear-gradient(90deg,#fdfdfd,#e8e8e8 60%,#d0d0d0);box-sizing:border-box;"></div>
<div class="a" style="left:1763px;top:1002px;width:19px;height:20px;border-top:1px solid #8a8a8a;background:linear-gradient(90deg,#fafafa,#e4e4e4);box-sizing:border-box;"></div>
<svg class="a" style="left:1763px;top:1003px" width="19" height="19"><path d="M5 7 h9 l-4.5 5 z" fill="#333"/></svg>
<div class="a" style="left:0;top:1023px;width:1920px;height:3px;background:#c8c8c8;"></div>
<div class="a" style="left:0;top:1026px;width:1920px;height:54px;background:linear-gradient(90deg,#382e2e 0px,#3d312c 600px,#262220 760px,#1e1c1f 900px,#2a2624 1000px,#3c322d 1150px,#3e332e 1400px,#352c2a 1600px,#262428 1920px);"></div>
<div class="a" style="left:65px;top:1026px;width:464px;height:54px;background:#f0f0f0;border-bottom:1px solid #bdbdbd;box-sizing:border-box;"></div>
<svg class="a" style="left:22px;top:1042px" width="22" height="22" viewBox="0 0 22 22">
<path d="M0.5 3 L9 1.8 V10.2 H0.5 Z M10 1.7 L19.5 0.5 V10.2 H10 Z M0.5 11.2 H9 V19.6 L0.5 18.4 Z M10 11.2 H19.5 V21 L10 19.8 Z" fill="#fff"/></svg>
<svg class="a" style="left:80px;top:1036px" width="34" height="34" viewBox="0 0 34 34">
<circle cx="20.5" cy="13" r="8.8" stroke="#000" stroke-width="1.8" fill="none"/>
<path d="M14.2 19.5 L3.5 30" stroke="#000" stroke-width="2"/></svg>
<div class="t" style="left:130.0px;top:1043.9px;font-size:19.5px;line-height:21.78px;color:#222;letter-spacing:0.95px;">Πληκτρολογήστε εδώ για αναζήτηση</div>
<svg class="a" style="left:547px;top:1040px" width="30" height="28" viewBox="0 0 30 28">
<path d="M2 2 v3 h14 v-3 M2 26 v-3 h14 v3 M3 9 h13 v11 h-13 z" stroke="#fff" stroke-width="1.5" fill="none"/>
<path d="M24 2 v24" stroke="#fff" stroke-width="1.5"/><circle cx="24" cy="10" r="2" fill="#fff"/></svg>
<svg class="a" style="left:614px;top:1040px" width="34" height="28" viewBox="0 0 34 28">
<path d="M2 2 h9 l2 2 h19 v19 h-30 z" fill="#f0c040"/><path d="M2 6 h30 v17 h-30 z" fill="#f8d46a"/>
<path d="M7 24 v-10 h20 v10 h-5 v-5 h-10 v5 z" fill="#2f8fe0"/></svg>
<div class="a" style="left:603px;top:1077px;width:55px;height:3px;background:#76b9ed;"></div>
<svg class="a" style="left:681px;top:1036px" width="34" height="34" viewBox="0 0 34 34">
<path d="M11 10 v-5 q0 -3 3 -3 h6 q3 0 3 3 v5" stroke="#f4f4f4" stroke-width="2" fill="none"/>
<rect x="2" y="9" width="30" height="23" fill="#f4f4f4"/>
<rect x="12" y="15" width="5" height="5" fill="#f25022"/><rect x="18" y="15" width="5" height="5" fill="#7fba00"/>
<rect x="12" y="21" width="5" height="5" fill="#00a4ef"/><rect x="18" y="21" width="5" height="5" fill="#ffb900"/></svg>
<svg class="a" style="left:747px;top:1038px" width="34" height="30" viewBox="0 0 34 30">
<path d="M1 9 L17 1 L33 9 V28 H1 Z" fill="#2a8ae0"/><path d="M1 9 L17 20 L33 9 V28 H1 Z" fill="#52aaf0"/><path d="M1 28 L14 17 M33 28 L20 17" stroke="#2a8ae0" stroke-width="1"/></svg>
<svg class="a" style="left:814px;top:1036px" width="34" height="34" viewBox="0 0 34 34">
<defs><linearGradient id="edg" x1="0" y1="0" x2="1" y2="1"><stop offset="0" stop-color="#35c1f1"/><stop offset="1" stop-color="#66eb6e"/></linearGradient>
<linearGradient id="edb" x1="0" y1="0" x2="0" y2="1"><stop offset="0" stop-color="#1d8ad8"/><stop offset="1" stop-color="#0c59a4"/></linearGradient></defs>
<circle cx="16.5" cy="16.5" r="16" fill="url(#edb)"/>
<path d="M1 15 A16 16 0 0 1 32.5 16 Q32.5 22 26 22 Q19 22 19 18 Q19 13 13 13 Q5 13 1 20 Z" fill="url(#edg)"/>
<path d="M9 26 Q6 17 14 15 Q19 14 19 19 Q19 25 28 26 Q22 33 15 32 Q11 31 9 26 Z" fill="#0f4f94" opacity="0.7"/>
<ellipse cx="15.5" cy="18.5" rx="3.5" ry="2.3" fill="#1e1c1f"/></svg>
<svg class="a" style="left:880px;top:1035px" width="34" height="34" viewBox="0 0 34 34">
<ellipse cx="17" cy="17.3" rx="15" ry="15.5" fill="#e01a26"/><ellipse cx="17" cy="17.3" rx="6.5" ry="12" fill="#1e1c1f"/></svg>
<div class="a" style="left:937px;top:1026px;width:42px;height:54px;background:#3d6a3a;"></div>
<div class="a" style="left:979px;top:1026px;width:12px;height:54px;background:#353333;"></div>
<div class="a" style="left:937px;top:1077px;width:54px;height:3px;background:#55dd44;"></div>
<svg class="a" style="left:947px;top:1035px" width="34" height="34" viewBox="0 0 34 34">
<g transform="rotate(62 17 17)"><circle cx="17" cy="17" r="15" fill="#e33b2e"/><path d="M17 17 L30 24.5 A15 15 0 0 1 4 24.5 Z" fill="#2ba24c"/><path d="M17 17 L4 24.5 A15 15 0 0 1 17 2 Z" fill="#e33b2e"/>
<path d="M17 17 L17 2 A15 15 0 0 1 30 24.5 Z" fill="#fbc02d"/></g><circle cx="17" cy="17" r="7" fill="#fff"/><circle cx="17" cy="17" r="5.5" fill="#3b7de8"/></svg>
<svg class="a" style="left:1013px;top:1035px" width="34" height="34" viewBox="0 0 34 34">
<circle cx="17" cy="17.3" r="15" fill="#f0a020"/><path d="M17 17.3 L17 2.3 A15 15 0 0 1 31.5 21 Z" fill="#7a4ae0"/><path d="M17 17.3 L4 25 A15 15 0 0 1 17 2.3 Z" fill="#f07a10"/>
<path d="M9 8 Q17 4 26 9 Q26 22 17 27 Q9 22 9 8 Z" fill="#fafafa"/><circle cx="17.5" cy="14" r="2.2" fill="#1e2a4a"/><rect x="16.5" y="14" width="2" height="5" fill="#1e2a4a"/></svg>
<svg class="a" style="left:1079px;top:1036px" width="36" height="34" viewBox="0 0 36 34">
<path d="M8 2 h18 l6 6 v24 h-24 z" fill="#e8ece8" stroke="#888" stroke-width="1"/><rect x="12" y="16" width="18" height="13" fill="#3a8a3a"/>
<path d="M12 22.5 h18 M21 16 v13" stroke="#e8ece8" stroke-width="1.6"/><path d="M3 8 l6 -4 v20 l-6 4 z" fill="#c0c8c0"/></svg>
<div class="a" style="left:1131px;top:1026px;width:60px;height:54px;background:#645852;"></div>
<div class="a" style="left:1191px;top:1026px;width:5px;height:54px;background:#4a3e3a;"></div>
<div class="a" style="left:1131px;top:1077px;width:65px;height:3px;background:#76b9ed;"></div>
<div class="a" style="left:1070px;top:1077px;width:54px;height:3px;background:#76b9ed;"></div>
<svg class="a" style="left:1147px;top:1037px" width="33" height="33" viewBox="0 0 33 33">
<rect x="0" y="0" width="33" height="32" fill="#4a0caa"/>
<path d="M3 31 Q5 20 7 10 Q8 20 11 24 Q14 26 16 24 Q17 14 18 12 Q19 22 21 25 Q25 22 27 24 Q30 22 33 23 V31 Z" fill="#1ab4e8"/>
<path d="M4 30 Q7 22 8 17 Q9 24 12 26 Q15 27 17 25 Q18 20 19 19 Q20 25 23 27 Q28 25 33 26 V30 Z" fill="#30d040"/>
<ellipse cx="8.5" cy="24" rx="2.5" ry="3.5" fill="#f0e020"/><ellipse cx="18" cy="24" rx="2" ry="3.5" fill="#f0e020"/>
<ellipse cx="8.5" cy="24.5" rx="1.2" ry="2" fill="#e02020"/><ellipse cx="18" cy="24.5" rx="1" ry="2" fill="#e02020"/>
<text x="2.5" y="12" font-family="Liberation Sans" font-size="12.5" fill="#dcdcdc">REW</text>
<text x="19" y="17.5" font-family="Liberation Sans" font-size="5" fill="#dcdcdc">V5.1</text></svg>
<svg class="a" style="left:1213px;top:1038px" width="34" height="34" viewBox="0 0 34 34">
<rect x="1" y="1.5" width="30" height="9" rx="1.5" fill="#d0204a"/><rect x="1" y="11" width="30" height="9" rx="1.5" fill="#3a3ad0"/><rect x="1" y="20.5" width="30" height="9" rx="1.5" fill="#20a040"/>
<rect x="12" y="1" width="8" height="29" fill="#e8901a"/><rect x="11" y="13" width="10" height="7" fill="none" stroke="#f4f4f4" stroke-width="1.3"/></svg>
<svg class="a" style="left:1582px;top:1044px" width="20" height="14"><path d="M2 11 L9.5 3.5 L17 11" stroke="#fff" stroke-width="1.4" fill="none"/></svg>
<svg class="a" style="left:1611px;top:1040px" width="28" height="24" viewBox="0 0 28 24">
<path d="M3 3 v5 M7 3 v5 M1.5 8 h7 v3 q0 3 -3.5 3 q-3.5 0 -3.5 -3 z M5 14 v5" stroke="#fff" stroke-width="1.3" fill="none"/>
<rect x="9.5" y="6.5" width="15" height="11" stroke="#fff" stroke-width="1.2" fill="none"/><rect x="24.5" y="10" width="2" height="4" fill="#fff"/>
<path d="M13 8.5 l7 7 M20 8.5 l-7 7" stroke="#fff" stroke-width="1.4"/></svg>
<svg class="a" style="left:1648px;top:1042px" width="24" height="22" viewBox="0 0 24 22">
<path d="M1 19 a17 17 0 0 1 17 -17 M5 19 a13 13 0 0 1 13 -13 M9 19 a9 9 0 0 1 9 -9 M13 19 a5 5 0 0 1 5 -5" stroke="#fff" stroke-width="1.3" fill="none"/><circle cx="17.5" cy="18.5" r="1.7" fill="#fff"/></svg>
<svg class="a" style="left:1677px;top:1042px" width="26" height="22" viewBox="0 0 26 22">
<path d="M2 8 h4 l6 -5 v16 l-6 -5 h-4 z" stroke="#fff" stroke-width="1.3" fill="none"/>
<path d="M15 8 q2 3 0 6 M18 5 q4 6 0 12 M21 2 q6 9 0 18" stroke="#fff" stroke-width="1.3" fill="none"/></svg>
<div class="t" style="left:1430.0px;width:600px;text-align:center;top:1046.5px;font-size:16px;line-height:17.87px;color:#fff;">ΕΛ</div>
<div class="t" style="left:1501.0px;width:600px;text-align:center;top:1033.5px;font-size:16px;line-height:17.87px;color:#fff;">7:20 μμ</div>
<div class="t" style="left:1501.0px;width:600px;text-align:center;top:1057.5px;font-size:16px;line-height:17.87px;color:#fff;">6/9/2020</div>
<svg class="a" style="left:1863px;top:1041px" width="26" height="24" viewBox="0 0 26 24">
<path d="M1.5 1.5 h21 v16 h-7 l-4 4 v-4 h-10 z" stroke="#fff" stroke-width="1.4" fill="none"/><path d="M18 20 q4 0 4 -4" stroke="#fff" stroke-width="1.3" fill="none"/></svg>
<div class="a" style="left:1914px;top:1026px;width:1px;height:54px;background:#777;"></div>
</body></html>
